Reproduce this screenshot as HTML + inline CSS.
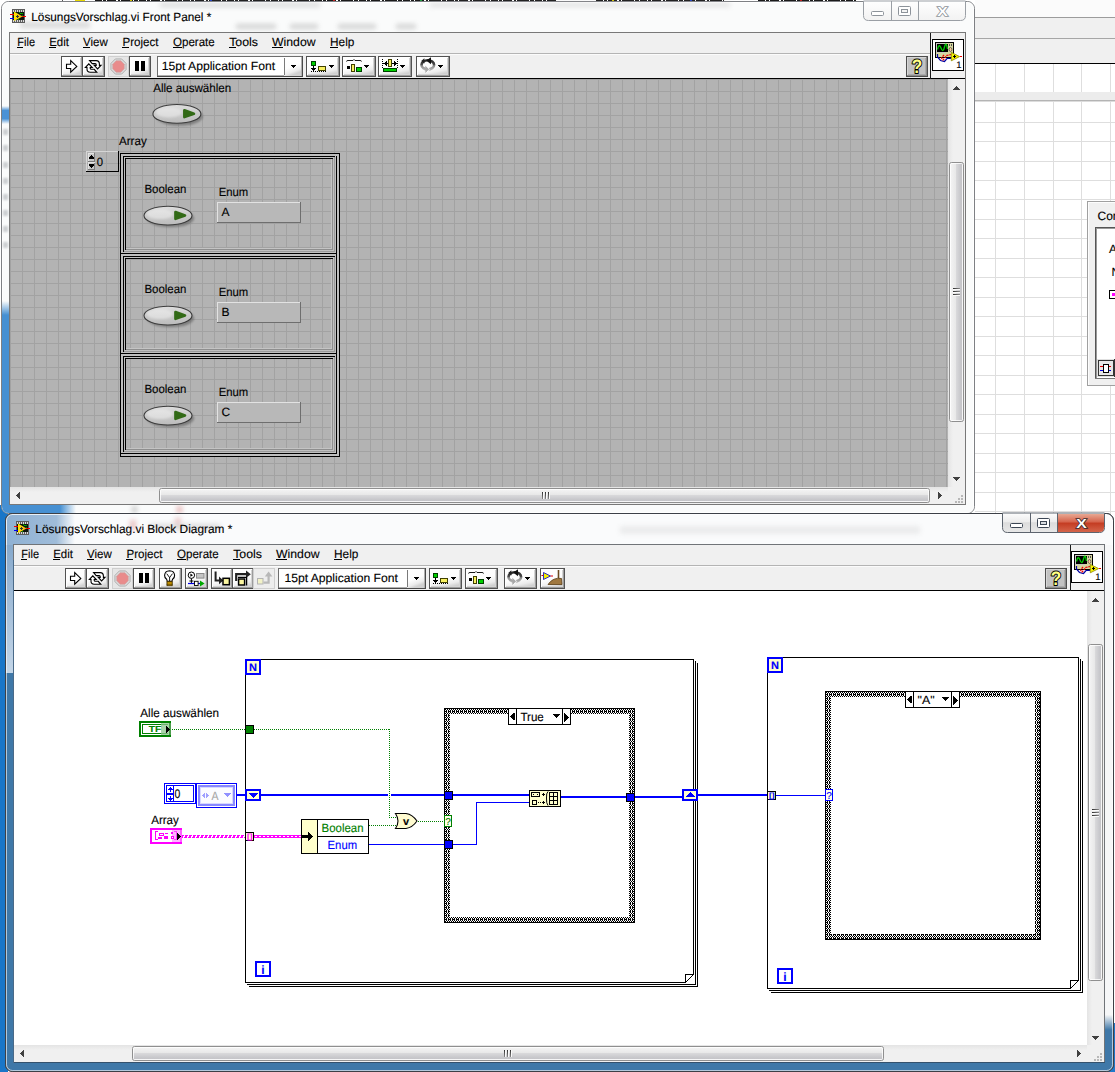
<!DOCTYPE html>
<html><head><meta charset="utf-8"><title>LabVIEW</title>
<style>
html,body{margin:0;padding:0;background:#fff;overflow:hidden}
svg{display:block;font-family:'Liberation Sans', sans-serif;}
svg text{white-space:pre}
</style></head><body>
<svg width="1115" height="1072" viewBox="0 0 1115 1072" shape-rendering="crispEdges" text-rendering="geometricPrecision">
<defs>
<pattern id="grid" x="10" y="79" width="12" height="12" patternUnits="userSpaceOnUse">
<rect width="12" height="12" fill="#b3b3b3"/><rect x="0" y="0" width="1" height="12" fill="#a2a2a2"/><rect x="0" y="0" width="12" height="1" fill="#a2a2a2"/>
</pattern>
<pattern id="chk" x="444" y="708" width="4" height="4" patternUnits="userSpaceOnUse">
<rect width="4" height="4" fill="#000"/>
<rect x="1" y="0" width="1" height="1" fill="#fff"/><rect x="0" y="1" width="1" height="1" fill="#fff"/><rect x="2" y="1" width="1" height="1" fill="#fff"/><rect x="1" y="2" width="1" height="1" fill="#fff"/><rect x="3" y="3" width="1" height="1" fill="#fff"/><rect x="3" y="0" width="1" height="1" fill="#fff"/><rect x="3" y="2" width="1" height="1" fill="#fff"/>
</pattern>
<pattern id="chk2" x="825" y="691" width="4" height="4" patternUnits="userSpaceOnUse">
<rect width="4" height="4" fill="#000"/>
<rect x="1" y="0" width="1" height="1" fill="#fff"/><rect x="0" y="1" width="1" height="1" fill="#fff"/><rect x="2" y="1" width="1" height="1" fill="#fff"/><rect x="1" y="2" width="1" height="1" fill="#fff"/><rect x="3" y="3" width="1" height="1" fill="#fff"/><rect x="3" y="0" width="1" height="1" fill="#fff"/><rect x="3" y="2" width="1" height="1" fill="#fff"/>
</pattern>
<linearGradient id="thumbV" x1="0" x2="1" y1="0" y2="0"><stop offset="0" stop-color="#f6f6f6"/><stop offset="0.45" stop-color="#e8e8e8"/><stop offset="0.5" stop-color="#d8d8da"/><stop offset="0.85" stop-color="#c4c4c8"/><stop offset="1" stop-color="#dedee0"/></linearGradient>
<linearGradient id="thumbH" x1="0" x2="0" y1="0" y2="1"><stop offset="0" stop-color="#f6f6f6"/><stop offset="0.45" stop-color="#e8e8e8"/><stop offset="0.5" stop-color="#d8d8da"/><stop offset="0.85" stop-color="#c4c4c8"/><stop offset="1" stop-color="#dedee0"/></linearGradient>
<linearGradient id="trackV" x1="0" x2="1" y1="0" y2="0"><stop offset="0" stop-color="#e4e4e4"/><stop offset="0.3" stop-color="#f0f0f0"/><stop offset="1" stop-color="#f0f0f0"/></linearGradient>
<linearGradient id="trackH" x1="0" x2="0" y1="0" y2="1"><stop offset="0" stop-color="#e4e4e4"/><stop offset="0.3" stop-color="#f0f0f0"/><stop offset="1" stop-color="#f0f0f0"/></linearGradient>
<linearGradient id="btn" x1="0" x2="0.35" y1="0" y2="1"><stop offset="0" stop-color="#ffffff"/><stop offset="0.6" stop-color="#fdfdfd"/><stop offset="0.85" stop-color="#ececec"/><stop offset="1" stop-color="#d0d0d0"/></linearGradient>
<linearGradient id="oval" x1="0" x2="0" y1="0" y2="1"><stop offset="0" stop-color="#dedede"/><stop offset="0.5" stop-color="#cacaca"/><stop offset="1" stop-color="#bcbcbc"/></linearGradient>
<linearGradient id="closeR" x1="0" x2="0" y1="0" y2="1"><stop offset="0" stop-color="#e8a893"/><stop offset="0.45" stop-color="#d5624a"/><stop offset="0.5" stop-color="#c43c22"/><stop offset="1" stop-color="#d4644a"/></linearGradient>
<linearGradient id="capG" x1="0" x2="0" y1="0" y2="1"><stop offset="0" stop-color="#fdfdfd"/><stop offset="0.45" stop-color="#ececec"/><stop offset="0.5" stop-color="#dcdcdc"/><stop offset="1" stop-color="#e8e8e8"/></linearGradient>
<linearGradient id="capI" x1="0" x2="0" y1="0" y2="1"><stop offset="0" stop-color="#ffffff"/><stop offset="1" stop-color="#f2f2f2"/></linearGradient>
<linearGradient id="fpLeft" x1="0" x2="0" y1="0" y2="1" gradientUnits="userSpaceOnUse"><stop offset="0" stop-color="#f4f5f6"/><stop offset="0.265" stop-color="#f4f5f6"/><stop offset="0.3" stop-color="#4d93cf"/><stop offset="1" stop-color="#3d86c8"/></linearGradient>
<linearGradient id="bdTitle" x1="6" x2="90" y1="0" y2="0" gradientUnits="userSpaceOnUse"><stop offset="0" stop-color="#8fb1d3"/><stop offset="0.6" stop-color="#9fbcd9"/><stop offset="0.82" stop-color="#fafbfc"/><stop offset="1" stop-color="#fafbfc"/></linearGradient>
<linearGradient id="fpBlueH" x1="60" x2="76" y1="0" y2="0" gradientUnits="userSpaceOnUse"><stop offset="0" stop-color="#4690d2"/><stop offset="1" stop-color="#fafbfb"/></linearGradient>
<filter id="blur2" x="-20%" y="-20%" width="140%" height="140%"><feGaussianBlur stdDeviation="1.2"/></filter>
<filter id="blur3" x="-20%" y="-50%" width="140%" height="200%"><feGaussianBlur stdDeviation="2.5"/></filter>
<linearGradient id="fpBlue" x1="0" x2="0" y1="301" y2="315" gradientUnits="userSpaceOnUse"><stop offset="0" stop-color="#fafbfb"/><stop offset="1" stop-color="#4690d2"/></linearGradient>
<filter id="blurA" x="-30%" y="-30%" width="160%" height="160%"><feGaussianBlur stdDeviation="0.5"/></filter>
<linearGradient id="bdLeft" x1="0" x2="0" y1="545" y2="673" gradientUnits="userSpaceOnUse"><stop offset="0" stop-color="#86a9cc"/><stop offset="1" stop-color="#c4d6e8"/></linearGradient>
<linearGradient id="bdRight" x1="0" x2="0" y1="1015" y2="1030" gradientUnits="userSpaceOnUse"><stop offset="0" stop-color="#f4f5f6"/><stop offset="1" stop-color="#3f78a8"/></linearGradient>
<pattern id="hatch" x="182" y="835" width="4" height="3" patternUnits="userSpaceOnUse"><rect width="4" height="3" fill="#ff00ff"/><rect x="2" y="0" width="1" height="1" fill="#fff"/><rect x="1" y="1" width="2" height="1" fill="#fff"/><rect x="1" y="2" width="1" height="1" fill="#fff"/></pattern>
<linearGradient id="ringG" x1="0" x2="0" y1="0" y2="1"><stop offset="0" stop-color="#2a2a2a"/><stop offset="0.45" stop-color="#4a4a4a"/><stop offset="0.6" stop-color="#8e8e8e"/><stop offset="1" stop-color="#b0b0b0"/></linearGradient>
<linearGradient id="smudge" x1="0" x2="0" y1="0" y2="1"><stop offset="0" stop-color="#fafbfb"/><stop offset="0.25" stop-color="#4a92d6"/><stop offset="0.7" stop-color="#4a92d6"/><stop offset="1" stop-color="#fafbfb"/></linearGradient>
<linearGradient id="triG" x1="0" x2="1" y1="0" y2="0"><stop offset="0" stop-color="#ffe800"/><stop offset="0.6" stop-color="#f8cc10"/><stop offset="1" stop-color="#e8a020"/></linearGradient>
<linearGradient id="gripH" x1="0" x2="1" y1="0" y2="0"><stop offset="0" stop-color="#2e2e2e"/><stop offset="1" stop-color="#8a8a8a"/></linearGradient>
<linearGradient id="gripV" x1="0" x2="0" y1="0" y2="1"><stop offset="0" stop-color="#2e2e2e"/><stop offset="1" stop-color="#8a8a8a"/></linearGradient>
<clipPath id="fpclip"><rect x="10" y="79" width="938" height="408"/></clipPath>
</defs>
<rect x="0" y="0" width="1115" height="1072" fill="#ffffff" />
<rect x="0" y="505" width="8" height="567" fill="#1976c8" />
<rect x="1108" y="1023" width="7" height="49" fill="#1e78c9" />
<rect x="62" y="0" width="1" height="1" fill="#555" />
<rect x="75" y="0" width="10" height="1" fill="#e8d800" />
<line x1="95" y1="0.5" x2="556" y2="0.5" stroke="#1a1a1a" stroke-width="1" stroke-dasharray="7 1 3 1 9 2 2 1 12 1 4 1"/>
<line x1="596" y1="0.5" x2="724" y2="0.5" stroke="#1a1a1a" stroke-width="1" stroke-dasharray="7 1 3 1 9 2 2 1 12 1 4 1"/>
<line x1="758" y1="0.5" x2="856" y2="0.5" stroke="#1a1a1a" stroke-width="1" stroke-dasharray="7 1 3 1 9 2 2 1 12 1 4 1"/>
<rect x="130" y="0" width="2" height="1" fill="#d0c000" />
<rect x="210" y="0" width="2" height="1" fill="#2040c0" />
<rect x="333" y="0" width="2" height="1" fill="#c02020" />
<rect x="420" y="0" width="2" height="1" fill="#20a040" />
<rect x="612" y="0" width="2" height="1" fill="#d0c000" />
<rect x="690" y="0" width="2" height="1" fill="#2040c0" />
<rect x="800" y="0" width="2" height="1" fill="#c02020" />
<rect x="975" y="0" width="140" height="17" fill="#fbfbfb" />
<rect x="975" y="17" width="140" height="1" fill="#9c9c9c" />
<rect x="975" y="18" width="140" height="20" fill="#f0f0f0" />
<rect x="975" y="38" width="140" height="1" fill="#a6a6a6" />
<rect x="975" y="39" width="140" height="24" fill="#f0f0f0" />
<rect x="975" y="63" width="140" height="1" fill="#000000" />
<rect x="975" y="64" width="140" height="450" fill="#ffffff" />
<rect x="995" y="64" width="1" height="28" fill="#dedede" />
<rect x="995" y="101" width="1" height="413" fill="#dedede" />
<rect x="1024" y="64" width="1" height="28" fill="#dedede" />
<rect x="1024" y="101" width="1" height="413" fill="#dedede" />
<rect x="1053" y="64" width="1" height="28" fill="#dedede" />
<rect x="1053" y="101" width="1" height="413" fill="#dedede" />
<rect x="1081" y="64" width="1" height="28" fill="#dedede" />
<rect x="1081" y="101" width="1" height="413" fill="#dedede" />
<rect x="1110" y="64" width="1" height="28" fill="#dedede" />
<rect x="1110" y="101" width="1" height="413" fill="#dedede" />
<rect x="975" y="122" width="140" height="1" fill="#dedede" />
<rect x="975" y="141" width="140" height="1" fill="#dedede" />
<rect x="975" y="161" width="140" height="1" fill="#dedede" />
<rect x="975" y="180" width="140" height="1" fill="#dedede" />
<rect x="975" y="199" width="140" height="1" fill="#dedede" />
<rect x="975" y="219" width="140" height="1" fill="#dedede" />
<rect x="975" y="238" width="140" height="1" fill="#dedede" />
<rect x="975" y="258" width="140" height="1" fill="#dedede" />
<rect x="975" y="277" width="140" height="1" fill="#dedede" />
<rect x="975" y="297" width="140" height="1" fill="#dedede" />
<rect x="975" y="316" width="140" height="1" fill="#dedede" />
<rect x="975" y="336" width="140" height="1" fill="#dedede" />
<rect x="975" y="355" width="140" height="1" fill="#dedede" />
<rect x="975" y="375" width="140" height="1" fill="#dedede" />
<rect x="975" y="394" width="140" height="1" fill="#dedede" />
<rect x="975" y="414" width="140" height="1" fill="#dedede" />
<rect x="975" y="433" width="140" height="1" fill="#dedede" />
<rect x="975" y="453" width="140" height="1" fill="#dedede" />
<rect x="975" y="472" width="140" height="1" fill="#dedede" />
<rect x="975" y="492" width="140" height="1" fill="#dedede" />
<rect x="975" y="511" width="140" height="1" fill="#dedede" />
<rect x="975" y="92" width="140" height="8" fill="#ececec" />
<rect x="975" y="100" width="140" height="1" fill="#b4b4b4" />
<rect x="975" y="101" width="140" height="1" fill="#dcdcdc" />
<rect x="1087" y="201" width="28" height="185" fill="#f0f0f0" />
<rect x="1087" y="201" width="1" height="185" fill="#a0a0a0" />
<rect x="1087" y="201" width="28" height="1" fill="#a0a0a0" />
<rect x="1087" y="385" width="28" height="1" fill="#a0a0a0" />
<rect x="1088" y="202" width="1" height="183" fill="#fdfdfd" />
<rect x="1088" y="202" width="27" height="1" fill="#fdfdfd" />
<rect x="1095" y="227" width="20" height="152" fill="#ffffff" />
<rect x="1095" y="227" width="1" height="152" fill="#555" />
<rect x="1095" y="227" width="20" height="1" fill="#555" />
<rect x="1095" y="378" width="20" height="1" fill="#777" />
<rect x="1096" y="228" width="1" height="150" fill="#999" />
<rect x="1096" y="228" width="19" height="1" fill="#999" />
<text x="1097.5" y="219.5" font-size="12" fill="#000" stroke="#000" stroke-width="0.12" font-weight="normal" text-anchor="start" >Con</text>
<text x="1109" y="252.7" font-size="12" fill="#000" stroke="#000" stroke-width="0.12" font-weight="normal" text-anchor="start" >Ar</text>
<text x="1111.5" y="276" font-size="12" fill="#000" stroke="#000" stroke-width="0.12" font-weight="normal" text-anchor="start" >No</text>
<rect x="1109.5" y="290.5" width="9" height="8" fill="#fff" stroke="#000" stroke-width="1"/>
<rect x="1112" y="293" width="3" height="3" fill="#ff00ff" />
<rect x="1097" y="359" width="18" height="18" fill="#e0e0e0" />
<rect x="1098.5" y="360.5" width="15" height="15" fill="#e6e6e6" stroke="#333" stroke-width="1"/>
<rect x="1100" y="366" width="11" height="1" fill="#e00000" />
<rect x="1100" y="370" width="11" height="1" fill="#0000e0" />
<rect x="1103.5" y="364.5" width="5" height="8" fill="#fff" stroke="#000" stroke-width="1"/>
<rect x="1114" y="359" width="1" height="18" fill="#333" />
<g id="fpwin">
<rect x="1.5" y="1.5" width="973" height="512" rx="7" fill="#fafbfb" stroke="#7e8084" shape-rendering="geometricPrecision"/>
<rect x="2.5" y="2.5" width="971" height="510" rx="6" fill="none" stroke="#ffffff" shape-rendering="geometricPrecision"/>
<g filter="url(#blur3)" opacity="0.35"><rect x="236" y="24" width="40" height="5" fill="#8a8a8a"/><rect x="290" y="24" width="28" height="5" fill="#8a8a8a"/><rect x="338" y="24" width="38" height="5" fill="#8a8a8a"/><rect x="396" y="24" width="20" height="5" fill="#8a8a8a"/><rect x="20" y="22" width="70" height="6" fill="#9a9a9a"/><rect x="132" y="506" width="5" height="7" fill="#707070"/><rect x="177" y="506" width="5" height="7" fill="#c03030"/><rect x="160" y="3" width="160" height="4" fill="#9a9a9a"/><rect x="430" y="3" width="300" height="4" fill="#b0b0b0"/></g>
<path d="M2,300 L9,300 L9,505 L60,505 L60,513 L9,513 Q2,513 2,506 Z" fill="url(#fpBlue)" shape-rendering="geometricPrecision"/>
<rect x="60" y="505" width="16" height="8" fill="url(#fpBlueH)"/>
<g filter="url(#blur2)" opacity="0.55"><rect x="3" y="129" width="5" height="6" fill="#a8acb0"/><rect x="3" y="145" width="5" height="6" fill="#a8acb0"/><rect x="3" y="162" width="5" height="6" fill="#a8acb0"/><rect x="3" y="178" width="5" height="6" fill="#a8acb0"/><rect x="3" y="194" width="5" height="6" fill="#a8acb0"/><rect x="3" y="210" width="5" height="6" fill="#a8acb0"/><rect x="3" y="226" width="5" height="6" fill="#a8acb0"/><rect x="3" y="242" width="5" height="6" fill="#a8acb0"/></g>
<rect x="2" y="106" width="7" height="18" fill="url(#smudge)"/>
<rect x="9.5" y="32.5" width="956" height="472" fill="none" stroke="#787878" stroke-width="1"/>
<rect x="10" y="33" width="955" height="471" fill="#f0f0f0" />
<rect x="10" y="53" width="920" height="1" fill="#b4b4b4" />
<rect x="10" y="54" width="920" height="1" fill="#fbfbfb" />
<rect x="10" y="78" width="955" height="1" fill="#000000" />
<rect x="930" y="33" width="1" height="46" fill="#1a1a1a" />
<text x="17.3" y="45.7" font-size="12" fill="#000" stroke="#000" stroke-width="0.12" font-weight="normal" text-anchor="start" textLength="17.7" lengthAdjust="spacingAndGlyphs" >File</text>
<rect x="17" y="47" width="6" height="1" fill="#000" />
<text x="49.2" y="45.7" font-size="12" fill="#000" stroke="#000" stroke-width="0.12" font-weight="normal" text-anchor="start" textLength="19.7" lengthAdjust="spacingAndGlyphs" >Edit</text>
<rect x="49" y="47" width="7" height="1" fill="#000" />
<text x="83" y="45.7" font-size="12" fill="#000" stroke="#000" stroke-width="0.12" font-weight="normal" text-anchor="start" textLength="24.7" lengthAdjust="spacingAndGlyphs" >View</text>
<rect x="83" y="47" width="7" height="1" fill="#000" />
<text x="122.5" y="45.7" font-size="12" fill="#000" stroke="#000" stroke-width="0.12" font-weight="normal" text-anchor="start" textLength="36" lengthAdjust="spacingAndGlyphs" >Project</text>
<rect x="122" y="47" width="7" height="1" fill="#000" />
<text x="173" y="45.7" font-size="12" fill="#000" stroke="#000" stroke-width="0.12" font-weight="normal" text-anchor="start" textLength="41.7" lengthAdjust="spacingAndGlyphs" >Operate</text>
<rect x="173" y="47" width="9" height="1" fill="#000" />
<text x="229.2" y="45.7" font-size="12" fill="#000" stroke="#000" stroke-width="0.12" font-weight="normal" text-anchor="start" textLength="28.8" lengthAdjust="spacingAndGlyphs" >Tools</text>
<rect x="229" y="47" width="7" height="1" fill="#000" />
<text x="272" y="45.7" font-size="12" fill="#000" stroke="#000" stroke-width="0.12" font-weight="normal" text-anchor="start" textLength="43.6" lengthAdjust="spacingAndGlyphs" >Window</text>
<rect x="272" y="47" width="11" height="1" fill="#000" />
<text x="330.1" y="45.7" font-size="12" fill="#000" stroke="#000" stroke-width="0.12" font-weight="normal" text-anchor="start" textLength="24.3" lengthAdjust="spacingAndGlyphs" >Help</text>
<rect x="330" y="47" width="8" height="1" fill="#000" />
<text x="31.3" y="20.8" font-size="12" fill="#000" stroke="#000" stroke-width="0.12" font-weight="normal" text-anchor="start" textLength="180" lengthAdjust="spacingAndGlyphs" >LösungsVorschlag.vi Front Panel *</text>
<rect x="12" y="9" width="13" height="14" fill="#5c5c5c" />
<rect x="13" y="10" width="1" height="2" fill="#d8d8d8" />
<rect x="13" y="20" width="1" height="2" fill="#d8d8d8" />
<rect x="15" y="10" width="1" height="2" fill="#d8d8d8" />
<rect x="15" y="20" width="1" height="2" fill="#d8d8d8" />
<rect x="17" y="10" width="1" height="2" fill="#d8d8d8" />
<rect x="17" y="20" width="1" height="2" fill="#d8d8d8" />
<rect x="19" y="10" width="1" height="2" fill="#d8d8d8" />
<rect x="19" y="20" width="1" height="2" fill="#d8d8d8" />
<rect x="21" y="10" width="1" height="2" fill="#d8d8d8" />
<rect x="21" y="20" width="1" height="2" fill="#d8d8d8" />
<rect x="23" y="10" width="1" height="2" fill="#d8d8d8" />
<rect x="23" y="20" width="1" height="2" fill="#d8d8d8" />
<rect x="13" y="12" width="11" height="8" fill="#0c140c" />
<rect x="19" y="12" width="1" height="1" fill="#00a000" />
<rect x="21" y="13" width="2" height="1" fill="#00a000" />
<rect x="22" y="15" width="1" height="2" fill="#008000" />
<rect x="18" y="19" width="1" height="1" fill="#00a000" />
<rect x="20" y="13" width="1" height="1" fill="#00c000" />
<rect x="10" y="14" width="4" height="1" fill="#f00000" />
<rect x="10" y="18" width="4" height="1" fill="#0000f0" />
<rect x="22" y="16" width="4" height="1" fill="#f00000" />
<polygon points="14,11.5 22.6,16.4 14,21" fill="url(#triG)" shape-rendering="geometricPrecision"/>
<rect x="16" y="16" width="3" height="1" fill="#333" />
<rect x="17" y="15" width="1" height="3" fill="#333" />
<path d="M863.5,1 L863.5,15.5 Q863.5,20.5 868.5,20.5 L960.5,20.5 Q965.5,20.5 965.5,15.5 L965.5,1 Z" fill="url(#capI)" stroke="#9a9fa5" shape-rendering="geometricPrecision"/>
<rect x="891" y="1" width="1" height="20" fill="#9a9fa5" />
<rect x="918" y="1" width="1" height="20" fill="#9a9fa5" />
<rect x="871.5" y="11.5" width="12" height="4" rx="1" fill="#fff" stroke="#8d939a" shape-rendering="geometricPrecision"/>
<rect x="898.5" y="6.5" width="12" height="9" rx="1" fill="#fff" stroke="#8d939a" shape-rendering="geometricPrecision"/>
<rect x="901.5" y="9.5" width="6" height="3" fill="#f4f4f4" stroke="#8d939a" shape-rendering="geometricPrecision"/>
<text x="942.5" y="15.6" font-size="13" font-weight="bold" text-anchor="middle" fill="#fff" stroke="#8d939a" stroke-width="1.5" paint-order="stroke" textLength="10.5" lengthAdjust="spacingAndGlyphs" shape-rendering="geometricPrecision">X</text>
<rect x="61" y="56" width="22" height="21" fill="url(#btn)" />
<rect x="61.5" y="56.5" width="21" height="20" fill="none" stroke="#525252" stroke-width="1"/>
<rect x="62" y="75" width="20" height="1" fill="#9c9c9c" />
<rect x="81" y="57" width="1" height="19" fill="#9c9c9c" />
<rect x="63" y="74" width="18" height="1" fill="#d4d4d4" />
<rect x="80" y="58" width="1" height="17" fill="#d4d4d4" />
<rect x="62" y="57" width="19" height="1" fill="#ffffff" />
<rect x="62" y="57" width="1" height="18" fill="#ffffff" />
<polygon points="66.5,64.3 70.7,64.3 70.7,60.6 76.8,66.4 70.7,72.2 70.7,68.5 66.5,68.5" fill="#fff" stroke="#000" stroke-width="1.1" shape-rendering="geometricPrecision"/>
<rect x="82" y="56" width="23" height="21" fill="url(#btn)" />
<rect x="82.5" y="56.5" width="22" height="20" fill="none" stroke="#525252" stroke-width="1"/>
<rect x="83" y="75" width="21" height="1" fill="#9c9c9c" />
<rect x="103" y="57" width="1" height="19" fill="#9c9c9c" />
<rect x="84" y="74" width="19" height="1" fill="#d4d4d4" />
<rect x="102" y="58" width="1" height="17" fill="#d4d4d4" />
<rect x="83" y="57" width="20" height="1" fill="#ffffff" />
<rect x="83" y="57" width="1" height="18" fill="#ffffff" />
<g shape-rendering="geometricPrecision" fill="#fff" stroke="#000" stroke-width="1.1" stroke-linejoin="miter"><path d="M89.6,60.6 L96.2,60.6 Q99.4,60.8 99.4,64 L99.4,65.4 L101,65.4 L97.6,69 L94.2,65.4 L96.2,65.4 L96.2,64.6 Q96.2,63.6 95.2,63.6 L92.2,63.6 Z"/><path d="M96.8,72.3 L90.2,72.3 Q87,72.1 87,68.9 L87,67.5 L85.4,67.5 L88.8,63.9 L92.2,67.5 L90.2,67.5 L90.2,68.3 Q90.2,69.3 91.2,69.3 L94.2,69.3 Z"/></g>
<rect x="108" y="56" width="21" height="21" fill="#e6e6e6" />
<rect x="108.5" y="56.5" width="20" height="20" fill="none" stroke="#cfcfcf" stroke-width="1"/>
<polygon points="126.08,69.64 121.64,74.08 115.36,74.08 110.92,69.64 110.92,63.36 115.36,58.92 121.64,58.92 126.08,63.36" fill="#dcdcdc" stroke="#a4a4a4" stroke-width="0.8" shape-rendering="geometricPrecision"/>
<polygon points="124.23,68.87 120.87,72.23 116.13,72.23 112.77,68.87 112.77,64.13 116.13,60.77 120.87,60.77 124.23,64.13" fill="#e98b8b" stroke="#c9a0a0" stroke-width="0.6" shape-rendering="geometricPrecision"/>
<rect x="129" y="56" width="22" height="21" fill="url(#btn)" />
<rect x="129.5" y="56.5" width="21" height="20" fill="none" stroke="#525252" stroke-width="1"/>
<rect x="130" y="75" width="20" height="1" fill="#9c9c9c" />
<rect x="149" y="57" width="1" height="19" fill="#9c9c9c" />
<rect x="131" y="74" width="18" height="1" fill="#d4d4d4" />
<rect x="148" y="58" width="1" height="17" fill="#d4d4d4" />
<rect x="130" y="57" width="19" height="1" fill="#ffffff" />
<rect x="130" y="57" width="1" height="18" fill="#ffffff" />
<rect x="135" y="61" width="4" height="10" fill="#000" />
<rect x="141" y="61" width="4" height="10" fill="#000" />
<rect x="157" y="56" width="146" height="21" fill="#ffffff" />
<rect x="157" y="56" width="146" height="1" fill="#6e6e6e" />
<rect x="157" y="56" width="1" height="21" fill="#6e6e6e" />
<rect x="157" y="76" width="146" height="1" fill="#4a4a4a" />
<rect x="302" y="56" width="1" height="21" fill="#4a4a4a" />
<rect x="158" y="75" width="144" height="1" fill="#b0b0b0" />
<rect x="301" y="57" width="1" height="19" fill="#b0b0b0" />
<rect x="284" y="57" width="17" height="19" fill="url(#btn)" />
<rect x="284" y="58" width="1" height="17" fill="#7a7a7a" />
<rect x="291" y="65" width="5" height="1" fill="#000" />
<rect x="292" y="66" width="3" height="1" fill="#000" />
<rect x="293" y="67" width="1" height="1" fill="#000" />
<text x="161.7" y="70" font-size="12" fill="#000" stroke="#000" stroke-width="0.12" font-weight="normal" text-anchor="start" textLength="113.5" lengthAdjust="spacingAndGlyphs" >15pt Application Font</text>
<rect x="306" y="56" width="34" height="21" fill="url(#btn)" />
<rect x="306.5" y="56.5" width="33" height="20" fill="none" stroke="#525252" stroke-width="1"/>
<rect x="307" y="75" width="32" height="1" fill="#9c9c9c" />
<rect x="338" y="57" width="1" height="19" fill="#9c9c9c" />
<rect x="308" y="74" width="30" height="1" fill="#d4d4d4" />
<rect x="337" y="58" width="1" height="17" fill="#d4d4d4" />
<rect x="307" y="57" width="31" height="1" fill="#ffffff" />
<rect x="307" y="57" width="1" height="18" fill="#ffffff" />
<rect x="311.5" y="61.5" width="4" height="4" fill="#00d000" stroke="#004000" stroke-width="1"/>
<rect x="313" y="66" width="1" height="5" fill="#000" />
<rect x="311" y="68" width="5" height="1" fill="#000" />
<rect x="312" y="69" width="3" height="1" fill="#000" />
<rect x="318.5" y="66.5" width="7" height="4" fill="#f8f060" stroke="#404000" stroke-width="1"/>
<line x1="311" y1="71.5" x2="326" y2="71.5" stroke="#000" stroke-dasharray="1 1"/>
<rect x="329" y="65" width="5" height="1" fill="#000" />
<rect x="330" y="66" width="3" height="1" fill="#000" />
<rect x="331" y="67" width="1" height="1" fill="#000" />
<rect x="342" y="56" width="34" height="21" fill="url(#btn)" />
<rect x="342.5" y="56.5" width="33" height="20" fill="none" stroke="#525252" stroke-width="1"/>
<rect x="343" y="75" width="32" height="1" fill="#9c9c9c" />
<rect x="374" y="57" width="1" height="19" fill="#9c9c9c" />
<rect x="344" y="74" width="30" height="1" fill="#d4d4d4" />
<rect x="373" y="58" width="1" height="17" fill="#d4d4d4" />
<rect x="343" y="57" width="31" height="1" fill="#ffffff" />
<rect x="343" y="57" width="1" height="18" fill="#ffffff" />
<path d="M346.5,61.5 Q346.5,60.5 348,60.5 L353,60.5 L354,59.5 L355,60.5 L360,60.5 Q361.5,60.5 361.5,61.5" stroke="#000" fill="none" stroke-width="0.9" shape-rendering="geometricPrecision"/>
<rect x="347" y="66" width="3" height="3" fill="#000" />
<rect x="351.5" y="64.5" width="3" height="7" fill="#f8f060" stroke="#404000" stroke-width="1"/>
<rect x="356.5" y="67.5" width="5" height="4" fill="#00d000" stroke="#004000" stroke-width="1"/>
<rect x="364" y="65" width="5" height="1" fill="#000" />
<rect x="365" y="66" width="3" height="1" fill="#000" />
<rect x="366" y="67" width="1" height="1" fill="#000" />
<rect x="378" y="56" width="34" height="21" fill="url(#btn)" />
<rect x="378.5" y="56.5" width="33" height="20" fill="none" stroke="#525252" stroke-width="1"/>
<rect x="379" y="75" width="32" height="1" fill="#9c9c9c" />
<rect x="410" y="57" width="1" height="19" fill="#9c9c9c" />
<rect x="380" y="74" width="30" height="1" fill="#d4d4d4" />
<rect x="409" y="58" width="1" height="17" fill="#d4d4d4" />
<rect x="379" y="57" width="31" height="1" fill="#ffffff" />
<rect x="379" y="57" width="1" height="18" fill="#ffffff" />
<line x1="382.5" y1="59" x2="382.5" y2="68" stroke="#000" stroke-dasharray="1 1"/>
<line x1="397.5" y1="59" x2="397.5" y2="68" stroke="#000" stroke-dasharray="1 1"/>
<rect x="383" y="63" width="15" height="1" fill="#000" />
<rect x="384" y="63" width="1" height="1" fill="#000" />
<rect x="385" y="62" width="1" height="3" fill="#000" />
<rect x="386" y="61" width="1" height="5" fill="#000" />
<rect x="394" y="61" width="1" height="5" fill="#000" />
<rect x="395" y="62" width="1" height="3" fill="#000" />
<rect x="396" y="63" width="1" height="1" fill="#000" />
<rect x="388.5" y="59.5" width="3" height="7" fill="#f8f060" stroke="#404000" stroke-width="1"/>
<rect x="383.5" y="68.5" width="13" height="3" fill="#00d000" stroke="#004000" stroke-width="1"/>
<rect x="400" y="65" width="5" height="1" fill="#000" />
<rect x="401" y="66" width="3" height="1" fill="#000" />
<rect x="402" y="67" width="1" height="1" fill="#000" />
<rect x="416" y="56" width="34" height="21" fill="url(#btn)" />
<rect x="416.5" y="56.5" width="33" height="20" fill="none" stroke="#525252" stroke-width="1"/>
<rect x="417" y="75" width="32" height="1" fill="#9c9c9c" />
<rect x="448" y="57" width="1" height="19" fill="#9c9c9c" />
<rect x="418" y="74" width="30" height="1" fill="#d4d4d4" />
<rect x="447" y="58" width="1" height="17" fill="#d4d4d4" />
<rect x="417" y="57" width="31" height="1" fill="#ffffff" />
<rect x="417" y="57" width="1" height="18" fill="#ffffff" />
<g shape-rendering="geometricPrecision"><ellipse cx="427.8" cy="64.9" rx="6.3" ry="4.6" fill="none" stroke="url(#ringG)" stroke-width="2.6"/><polygon points="431.0,57.300000000000004 426.2,60.50000000000001 431.0,64.30000000000001" fill="#111"/><polygon points="424.40000000000003,58.300000000000004 421.2,60.900000000000006 424.40000000000003,63.50000000000001" fill="#222"/><polygon points="425.40000000000003,65.7 430.0,69.30000000000001 425.40000000000003,72.9" fill="#a8a8a8"/><path d="M426.40000000000003,65.9 L429.40000000000003,69.30000000000001 L426.40000000000003,72.7" fill="none" stroke="#fff" stroke-width="0.9"/></g>
<rect x="438" y="65" width="5" height="1" fill="#000" />
<rect x="439" y="66" width="3" height="1" fill="#000" />
<rect x="440" y="67" width="1" height="1" fill="#000" />
<rect x="906" y="56" width="22" height="21" fill="#c2c2c2" />
<rect x="906.5" y="56.5" width="21" height="20" fill="none" stroke="#4e4e4e" stroke-width="1"/>
<rect x="907" y="57" width="20" height="1" fill="#d6d6d6" />
<rect x="907" y="57" width="1" height="19" fill="#d6d6d6" />
<rect x="907" y="75" width="20" height="1" fill="#8c8c8c" />
<rect x="926" y="57" width="1" height="19" fill="#8c8c8c" />
<rect x="908" y="74" width="18" height="1" fill="#ababab" />
<rect x="925" y="58" width="1" height="17" fill="#ababab" />
<text x="916.9" y="73.4" font-size="19.5" font-weight="bold" text-anchor="middle" fill="#ffff84" stroke="#000" stroke-width="2" stroke-linejoin="round" paint-order="stroke" textLength="10.5" lengthAdjust="spacingAndGlyphs" shape-rendering="geometricPrecision">?</text>
<rect x="932" y="39" width="32" height="32" fill="#000" />
<rect x="933" y="40" width="30" height="30" fill="#fff" />
<rect x="935" y="42" width="19" height="16" fill="#000" />
<rect x="936" y="43" width="17" height="14" fill="#c8c8c0" />
<rect x="946" y="43" width="7" height="10" fill="#d6d6a0" />
<rect x="936" y="53" width="17" height="4" fill="#d6d6a0" />
<rect x="937" y="44" width="11" height="8" fill="#000" />
<path d="M937.5,49.5 Q939,42.5 941,48 T944.5,47 T947.5,49" stroke="#00d000" stroke-width="1.3" fill="none" shape-rendering="geometricPrecision"/>
<rect x="949" y="44" width="1" height="2" fill="#555" />
<rect x="951" y="44" width="1" height="2" fill="#555" />
<ellipse cx="950.5" cy="49.5" rx="1.4" ry="2" fill="#f8c890" stroke="#444" stroke-width="0.7" shape-rendering="geometricPrecision"/>
<path d="M937.5,54 L937.5,57 L940.5,60.5 L944.5,61.5 L947,58.5 L951,58.5" stroke="#0000a0" stroke-width="1.2" fill="none" shape-rendering="geometricPrecision"/>
<path d="M944,55 L941.5,58 L943,60 L945,58 L946.5,55.5 L951,54.5" stroke="#f00000" stroke-width="1.2" fill="none" stroke-dasharray="2.2 0.8" shape-rendering="geometricPrecision"/>
<polygon points="951.3,52.4 959.6,56.6 951.3,60.8" fill="#f4f000" stroke="#8a8400" stroke-width="0.8" shape-rendering="geometricPrecision"/>
<rect x="953" y="56" width="3" height="1" fill="#000" />
<rect x="954" y="55" width="1" height="3" fill="#000" />
<rect x="960" y="56" width="2" height="1" fill="#f00000" />
<text x="956.3" y="67.8" font-size="9.5" fill="#000" stroke="#000" stroke-width="0.12" font-weight="normal" text-anchor="start" >1</text>
<rect x="10" y="79" width="938" height="408" fill="url(#grid)" />
</g>
<text x="153.2" y="91.9" font-size="12" fill="#000" stroke="#000" stroke-width="0.12" font-weight="normal" text-anchor="start" textLength="78" lengthAdjust="spacingAndGlyphs" >Alle auswählen</text>
<g shape-rendering="geometricPrecision"><ellipse cx="179.5" cy="116.5" rx="23.5" ry="9.1" fill="#5e5e5e" filter="url(#blur2)" opacity="0.62"/><ellipse cx="176.9" cy="113.9" rx="24" ry="9.4" fill="url(#oval)" stroke="#3c3c3c" stroke-width="1.1"/><ellipse cx="168.9" cy="112.4" rx="13" ry="5.0" fill="#f0f0f0" opacity="0.55" filter="url(#blur2)"/><polygon points="184.4,110.30000000000001 193.9,113.7 184.4,117.10000000000001" fill="#336a18" stroke="#336a18" stroke-width="2.7" stroke-linejoin="round" filter="url(#blurA)"/></g>
<text x="119" y="144.7" font-size="12" fill="#000" stroke="#000" stroke-width="0.12" font-weight="normal" text-anchor="start" textLength="27.7" lengthAdjust="spacingAndGlyphs" >Array</text>
<rect x="86" y="151" width="32" height="1" fill="#d6d6d6" />
<rect x="86" y="151" width="1" height="21" fill="#d6d6d6" />
<rect x="86" y="171" width="33" height="1" fill="#000" />
<rect x="118" y="151" width="1" height="21" fill="#000" />
<rect x="88" y="153" width="7" height="17" fill="#c6c6c6" />
<rect x="88" y="153" width="7" height="1" fill="#e4e4e4" />
<rect x="88" y="153" width="1" height="17" fill="#e4e4e4" />
<rect x="88" y="169" width="7" height="1" fill="#7a7a7a" />
<rect x="94" y="153" width="1" height="17" fill="#7a7a7a" />
<rect x="88" y="161" width="7" height="1" fill="#7a7a7a" />
<rect x="88" y="162" width="7" height="1" fill="#e4e4e4" />
<rect x="91" y="155" width="1" height="1" fill="#000" />
<rect x="90" y="156" width="3" height="1" fill="#000" />
<rect x="89" y="157" width="5" height="1" fill="#000" />
<rect x="89" y="158" width="5" height="1" fill="#000" />
<rect x="89" y="165" width="5" height="1" fill="#000" />
<rect x="90" y="166" width="3" height="1" fill="#000" />
<rect x="91" y="167" width="1" height="1" fill="#000" />
<rect x="89" y="164" width="5" height="1" fill="#000" />
<text x="96.8" y="165.7" font-size="12" fill="#000" stroke="#000" stroke-width="0.12" font-weight="normal" text-anchor="start" textLength="6.3" lengthAdjust="spacingAndGlyphs" >0</text>
<rect x="121" y="154" width="218" height="302" fill="#bfbfbf" />
<rect x="120.5" y="153.5" width="219" height="303" fill="none" stroke="#000" stroke-width="1"/>
<rect x="124" y="157" width="212" height="94" fill="url(#grid)" />
<rect x="120" y="153" width="217" height="1" fill="#000" />
<rect x="123" y="156" width="214" height="1" fill="#000" />
<rect x="123" y="156" width="1" height="96" fill="#000" />
<rect x="125" y="158" width="209" height="1" fill="#000" />
<rect x="125" y="158" width="1" height="92" fill="#000" />
<rect x="124" y="157" width="212" height="1" fill="#bfbfbf" />
<rect x="124" y="157" width="1" height="94" fill="#bfbfbf" />
<rect x="126" y="249" width="207" height="1" fill="#8e8e8e" />
<rect x="332" y="159" width="1" height="91" fill="#8e8e8e" />
<rect x="124" y="251" width="211" height="1" fill="#9a9a9a" />
<rect x="334" y="157" width="1" height="95" fill="#9a9a9a" />
<rect x="126" y="248" width="206" height="1" fill="#c4c4c4" />
<rect x="331" y="159" width="1" height="90" fill="#c4c4c4" />
<rect x="125" y="250" width="209" height="1" fill="#c0c0c0" />
<rect x="333" y="158" width="1" height="93" fill="#c0c0c0" />
<rect x="335" y="156" width="1" height="97" fill="#bfbfbf" />
<text x="144.4" y="193.4" font-size="12" fill="#000" stroke="#000" stroke-width="0.12" font-weight="normal" text-anchor="start" textLength="42" lengthAdjust="spacingAndGlyphs" >Boolean</text>
<g shape-rendering="geometricPrecision"><ellipse cx="170.6" cy="218.2" rx="23.5" ry="9.1" fill="#5e5e5e" filter="url(#blur2)" opacity="0.62"/><ellipse cx="168" cy="215.6" rx="24" ry="9.4" fill="url(#oval)" stroke="#3c3c3c" stroke-width="1.1"/><ellipse cx="160" cy="214.1" rx="13" ry="5.0" fill="#f0f0f0" opacity="0.55" filter="url(#blur2)"/><polygon points="175.5,212.0 185.0,215.4 175.5,218.79999999999998" fill="#336a18" stroke="#336a18" stroke-width="2.7" stroke-linejoin="round" filter="url(#blurA)"/></g>
<text x="218.7" y="195.7" font-size="12" fill="#000" stroke="#000" stroke-width="0.12" font-weight="normal" text-anchor="start" textLength="29.5" lengthAdjust="spacingAndGlyphs" >Enum</text>
<rect x="217" y="202" width="84" height="21" fill="#b8b8b8" />
<rect x="217" y="202" width="84" height="1" fill="#e2e2e2" />
<rect x="217" y="202" width="1" height="21" fill="#e2e2e2" />
<rect x="217" y="222" width="84" height="1" fill="#6e6e6e" />
<rect x="300" y="202" width="1" height="21" fill="#6e6e6e" />
<text x="221.6" y="216.4" font-size="12" fill="#000" stroke="#000" stroke-width="0.12" font-weight="normal" text-anchor="start" >A</text>
<rect x="124" y="257" width="212" height="94" fill="url(#grid)" />
<rect x="120" y="253" width="217" height="1" fill="#000" />
<rect x="123" y="256" width="214" height="1" fill="#000" />
<rect x="123" y="256" width="1" height="96" fill="#000" />
<rect x="125" y="258" width="209" height="1" fill="#000" />
<rect x="125" y="258" width="1" height="92" fill="#000" />
<rect x="124" y="257" width="212" height="1" fill="#bfbfbf" />
<rect x="124" y="257" width="1" height="94" fill="#bfbfbf" />
<rect x="126" y="349" width="207" height="1" fill="#8e8e8e" />
<rect x="332" y="259" width="1" height="91" fill="#8e8e8e" />
<rect x="124" y="351" width="211" height="1" fill="#9a9a9a" />
<rect x="334" y="257" width="1" height="95" fill="#9a9a9a" />
<rect x="126" y="348" width="206" height="1" fill="#c4c4c4" />
<rect x="331" y="259" width="1" height="90" fill="#c4c4c4" />
<rect x="125" y="350" width="209" height="1" fill="#c0c0c0" />
<rect x="333" y="258" width="1" height="93" fill="#c0c0c0" />
<rect x="335" y="256" width="1" height="97" fill="#bfbfbf" />
<text x="144.4" y="293.4" font-size="12" fill="#000" stroke="#000" stroke-width="0.12" font-weight="normal" text-anchor="start" textLength="42" lengthAdjust="spacingAndGlyphs" >Boolean</text>
<g shape-rendering="geometricPrecision"><ellipse cx="170.6" cy="318.20000000000005" rx="23.5" ry="9.1" fill="#5e5e5e" filter="url(#blur2)" opacity="0.62"/><ellipse cx="168" cy="315.6" rx="24" ry="9.4" fill="url(#oval)" stroke="#3c3c3c" stroke-width="1.1"/><ellipse cx="160" cy="314.1" rx="13" ry="5.0" fill="#f0f0f0" opacity="0.55" filter="url(#blur2)"/><polygon points="175.5,312.0 185.0,315.40000000000003 175.5,318.8" fill="#336a18" stroke="#336a18" stroke-width="2.7" stroke-linejoin="round" filter="url(#blurA)"/></g>
<text x="218.7" y="295.7" font-size="12" fill="#000" stroke="#000" stroke-width="0.12" font-weight="normal" text-anchor="start" textLength="29.5" lengthAdjust="spacingAndGlyphs" >Enum</text>
<rect x="217" y="302" width="84" height="21" fill="#b8b8b8" />
<rect x="217" y="302" width="84" height="1" fill="#e2e2e2" />
<rect x="217" y="302" width="1" height="21" fill="#e2e2e2" />
<rect x="217" y="322" width="84" height="1" fill="#6e6e6e" />
<rect x="300" y="302" width="1" height="21" fill="#6e6e6e" />
<text x="221.6" y="316.4" font-size="12" fill="#000" stroke="#000" stroke-width="0.12" font-weight="normal" text-anchor="start" >B</text>
<rect x="124" y="357" width="212" height="94" fill="url(#grid)" />
<rect x="120" y="353" width="217" height="1" fill="#000" />
<rect x="123" y="356" width="214" height="1" fill="#000" />
<rect x="123" y="356" width="1" height="96" fill="#000" />
<rect x="125" y="358" width="209" height="1" fill="#000" />
<rect x="125" y="358" width="1" height="92" fill="#000" />
<rect x="124" y="357" width="212" height="1" fill="#bfbfbf" />
<rect x="124" y="357" width="1" height="94" fill="#bfbfbf" />
<rect x="126" y="449" width="207" height="1" fill="#8e8e8e" />
<rect x="332" y="359" width="1" height="91" fill="#8e8e8e" />
<rect x="124" y="451" width="211" height="1" fill="#9a9a9a" />
<rect x="334" y="357" width="1" height="95" fill="#9a9a9a" />
<rect x="126" y="448" width="206" height="1" fill="#c4c4c4" />
<rect x="331" y="359" width="1" height="90" fill="#c4c4c4" />
<rect x="125" y="450" width="209" height="1" fill="#c0c0c0" />
<rect x="333" y="358" width="1" height="93" fill="#c0c0c0" />
<rect x="335" y="356" width="1" height="97" fill="#bfbfbf" />
<text x="144.4" y="393.4" font-size="12" fill="#000" stroke="#000" stroke-width="0.12" font-weight="normal" text-anchor="start" textLength="42" lengthAdjust="spacingAndGlyphs" >Boolean</text>
<g shape-rendering="geometricPrecision"><ellipse cx="170.6" cy="418.20000000000005" rx="23.5" ry="9.1" fill="#5e5e5e" filter="url(#blur2)" opacity="0.62"/><ellipse cx="168" cy="415.6" rx="24" ry="9.4" fill="url(#oval)" stroke="#3c3c3c" stroke-width="1.1"/><ellipse cx="160" cy="414.1" rx="13" ry="5.0" fill="#f0f0f0" opacity="0.55" filter="url(#blur2)"/><polygon points="175.5,412.0 185.0,415.40000000000003 175.5,418.8" fill="#336a18" stroke="#336a18" stroke-width="2.7" stroke-linejoin="round" filter="url(#blurA)"/></g>
<text x="218.7" y="395.7" font-size="12" fill="#000" stroke="#000" stroke-width="0.12" font-weight="normal" text-anchor="start" textLength="29.5" lengthAdjust="spacingAndGlyphs" >Enum</text>
<rect x="217" y="402" width="84" height="21" fill="#b8b8b8" />
<rect x="217" y="402" width="84" height="1" fill="#e2e2e2" />
<rect x="217" y="402" width="1" height="21" fill="#e2e2e2" />
<rect x="217" y="422" width="84" height="1" fill="#6e6e6e" />
<rect x="300" y="402" width="1" height="21" fill="#6e6e6e" />
<text x="221.6" y="416.4" font-size="12" fill="#000" stroke="#000" stroke-width="0.12" font-weight="normal" text-anchor="start" >C</text>
<rect x="336" y="156" width="1" height="298" fill="#000" />
<rect x="120" y="453" width="217" height="1" fill="#000" />
<rect x="120.5" y="153.5" width="219" height="303" fill="none" stroke="#000" stroke-width="1"/>
<rect x="948" y="79" width="17" height="408" fill="url(#trackV)" />
<rect x="956" y="86" width="1" height="1" fill="#404040" />
<rect x="955" y="87" width="3" height="1" fill="#404040" />
<rect x="954" y="88" width="5" height="1" fill="#404040" />
<rect x="953" y="89" width="7" height="1" fill="#404040" />
<rect x="953" y="477" width="7" height="1" fill="#404040" />
<rect x="954" y="478" width="5" height="1" fill="#404040" />
<rect x="955" y="479" width="3" height="1" fill="#404040" />
<rect x="956" y="480" width="1" height="1" fill="#404040" />
<rect x="949.5" y="162.5" width="14" height="259" rx="2" fill="url(#thumbV)" stroke="#8f8f8f" shape-rendering="geometricPrecision"/>
<rect x="950.5" y="163.5" width="12" height="257" rx="1" fill="none" stroke="#ffffff" stroke-opacity="0.8" shape-rendering="geometricPrecision"/>
<rect x="953" y="288" width="7" height="1" fill="url(#gripH)" />
<rect x="953" y="289" width="7" height="1" fill="#fafafa" />
<rect x="953" y="291" width="7" height="1" fill="url(#gripH)" />
<rect x="953" y="292" width="7" height="1" fill="#fafafa" />
<rect x="953" y="294" width="7" height="1" fill="url(#gripH)" />
<rect x="953" y="295" width="7" height="1" fill="#fafafa" />
<rect x="10" y="487" width="938" height="17" fill="url(#trackH)" />
<rect x="16" y="495" width="1" height="1" fill="#404040" />
<rect x="17" y="494" width="1" height="3" fill="#404040" />
<rect x="18" y="493" width="1" height="5" fill="#404040" />
<rect x="19" y="492" width="1" height="7" fill="#404040" />
<rect x="938" y="492" width="1" height="7" fill="#404040" />
<rect x="939" y="493" width="1" height="5" fill="#404040" />
<rect x="940" y="494" width="1" height="3" fill="#404040" />
<rect x="941" y="495" width="1" height="1" fill="#404040" />
<rect x="159.5" y="488.5" width="770" height="14" rx="2" fill="url(#thumbH)" stroke="#8f8f8f" shape-rendering="geometricPrecision"/>
<rect x="160.5" y="489.5" width="768" height="12" rx="1" fill="none" stroke="#ffffff" stroke-opacity="0.8" shape-rendering="geometricPrecision"/>
<rect x="542" y="492" width="1" height="7" fill="url(#gripV)" />
<rect x="543" y="492" width="1" height="7" fill="#fafafa" />
<rect x="545" y="492" width="1" height="7" fill="url(#gripV)" />
<rect x="546" y="492" width="1" height="7" fill="#fafafa" />
<rect x="548" y="492" width="1" height="7" fill="url(#gripV)" />
<rect x="549" y="492" width="1" height="7" fill="#fafafa" />
<rect x="948" y="487" width="17" height="17" fill="#f0f0f0" />
<rect x="955" y="501" width="2" height="2" fill="#b8b8b8" />
<rect x="958" y="501" width="2" height="2" fill="#b8b8b8" />
<rect x="961" y="501" width="2" height="2" fill="#b8b8b8" />
<rect x="958" y="498" width="2" height="2" fill="#b8b8b8" />
<rect x="961" y="498" width="2" height="2" fill="#b8b8b8" />
<rect x="961" y="495" width="2" height="2" fill="#b8b8b8" />
<g id="bdwin">
<rect x="5.5" y="513.5" width="1108" height="558" rx="7" fill="#fafbfc" stroke="#3c4047" shape-rendering="geometricPrecision"/>
<path d="M6.5,545 L6.5,520 Q6.5,514.5 12,514.5 L90,514.5 L90,545 Z" fill="url(#bdTitle)" shape-rendering="geometricPrecision"/>
<rect x="6" y="545" width="8" height="128" fill="url(#bdLeft)" />
<rect x="6" y="673" width="8" height="390" fill="#3f78a8" />
<path d="M6,1062 L1113,1062 L1113,1064 Q1113,1071 1106,1071 L13,1071 Q6,1071 6,1064 Z" fill="#3f78a8" shape-rendering="geometricPrecision"/>
<rect x="1105" y="545" width="8" height="475" fill="#f6f7f8" />
<rect x="1105" y="1015" width="8" height="50" fill="url(#bdRight)" />
<rect x="5.5" y="513.5" width="1108" height="558" rx="7" fill="none" stroke="#3c4047" shape-rendering="geometricPrecision"/>
<rect x="6.5" y="514.5" width="1106" height="556" rx="6" fill="none" stroke="#ffffff" stroke-opacity="0.6" shape-rendering="geometricPrecision"/>
<g filter="url(#blur3)" opacity="0.3"><rect x="130" y="520" width="6" height="10" fill="#c04040"/><rect x="175" y="518" width="6" height="12" fill="#c04040"/><rect x="150" y="524" width="70" height="5" fill="#909090"/><rect x="620" y="526" width="300" height="8" fill="#c8c8c8"/></g>
<rect x="13.5" y="544.5" width="1091" height="518" fill="none" stroke="#707478" stroke-width="1"/>
<rect x="13" y="1062" width="1092" height="1" fill="#34516c" />
<rect x="13" y="560" width="1" height="503" fill="#4a6a88" />
<rect x="14" y="545" width="1090" height="517" fill="#f0f0f0" />
<rect x="14" y="565" width="1056" height="1" fill="#b4b4b4" />
<rect x="14" y="566" width="1056" height="1" fill="#fbfbfb" />
<rect x="14" y="590" width="1090" height="1" fill="#000" />
<rect x="1070" y="545" width="1" height="46" fill="#1a1a1a" />
<text x="21.3" y="557.7" font-size="12" fill="#000" stroke="#000" stroke-width="0.12" font-weight="normal" text-anchor="start" textLength="17.7" lengthAdjust="spacingAndGlyphs" >File</text>
<rect x="21" y="559" width="6" height="1" fill="#000" />
<text x="53.2" y="557.7" font-size="12" fill="#000" stroke="#000" stroke-width="0.12" font-weight="normal" text-anchor="start" textLength="19.7" lengthAdjust="spacingAndGlyphs" >Edit</text>
<rect x="53" y="559" width="7" height="1" fill="#000" />
<text x="87" y="557.7" font-size="12" fill="#000" stroke="#000" stroke-width="0.12" font-weight="normal" text-anchor="start" textLength="24.7" lengthAdjust="spacingAndGlyphs" >View</text>
<rect x="87" y="559" width="7" height="1" fill="#000" />
<text x="126.5" y="557.7" font-size="12" fill="#000" stroke="#000" stroke-width="0.12" font-weight="normal" text-anchor="start" textLength="36" lengthAdjust="spacingAndGlyphs" >Project</text>
<rect x="126" y="559" width="7" height="1" fill="#000" />
<text x="177" y="557.7" font-size="12" fill="#000" stroke="#000" stroke-width="0.12" font-weight="normal" text-anchor="start" textLength="41.7" lengthAdjust="spacingAndGlyphs" >Operate</text>
<rect x="177" y="559" width="9" height="1" fill="#000" />
<text x="233.2" y="557.7" font-size="12" fill="#000" stroke="#000" stroke-width="0.12" font-weight="normal" text-anchor="start" textLength="28.8" lengthAdjust="spacingAndGlyphs" >Tools</text>
<rect x="233" y="559" width="7" height="1" fill="#000" />
<text x="276" y="557.7" font-size="12" fill="#000" stroke="#000" stroke-width="0.12" font-weight="normal" text-anchor="start" textLength="43.6" lengthAdjust="spacingAndGlyphs" >Window</text>
<rect x="276" y="559" width="11" height="1" fill="#000" />
<text x="334.1" y="557.7" font-size="12" fill="#000" stroke="#000" stroke-width="0.12" font-weight="normal" text-anchor="start" textLength="24.3" lengthAdjust="spacingAndGlyphs" >Help</text>
<rect x="334" y="559" width="8" height="1" fill="#000" />
<text x="35.3" y="532.8" font-size="12" fill="#000" stroke="#000" stroke-width="0.12" font-weight="normal" text-anchor="start" textLength="197" lengthAdjust="spacingAndGlyphs" >LösungsVorschlag.vi Block Diagram *</text>
<rect x="16" y="521" width="13" height="14" fill="#5c5c5c" />
<rect x="17" y="522" width="1" height="2" fill="#d8d8d8" />
<rect x="17" y="532" width="1" height="2" fill="#d8d8d8" />
<rect x="19" y="522" width="1" height="2" fill="#d8d8d8" />
<rect x="19" y="532" width="1" height="2" fill="#d8d8d8" />
<rect x="21" y="522" width="1" height="2" fill="#d8d8d8" />
<rect x="21" y="532" width="1" height="2" fill="#d8d8d8" />
<rect x="23" y="522" width="1" height="2" fill="#d8d8d8" />
<rect x="23" y="532" width="1" height="2" fill="#d8d8d8" />
<rect x="25" y="522" width="1" height="2" fill="#d8d8d8" />
<rect x="25" y="532" width="1" height="2" fill="#d8d8d8" />
<rect x="27" y="522" width="1" height="2" fill="#d8d8d8" />
<rect x="27" y="532" width="1" height="2" fill="#d8d8d8" />
<rect x="17" y="524" width="11" height="8" fill="#0c140c" />
<rect x="23" y="524" width="1" height="1" fill="#00a000" />
<rect x="25" y="525" width="2" height="1" fill="#00a000" />
<rect x="26" y="527" width="1" height="2" fill="#008000" />
<rect x="22" y="531" width="1" height="1" fill="#00a000" />
<rect x="24" y="525" width="1" height="1" fill="#00c000" />
<rect x="14" y="526" width="4" height="1" fill="#f00000" />
<rect x="14" y="530" width="4" height="1" fill="#0000f0" />
<rect x="26" y="528" width="4" height="1" fill="#f00000" />
<polygon points="18,523.5 26.6,528.4 18,533" fill="url(#triG)" shape-rendering="geometricPrecision"/>
<rect x="20" y="528" width="3" height="1" fill="#333" />
<rect x="21" y="527" width="1" height="3" fill="#333" />
<path d="M1002.5,513 L1002.5,527.5 Q1002.5,532.5 1007.5,532.5 L1099.5,532.5 Q1104.5,532.5 1104.5,527.5 L1104.5,513 Z" fill="url(#capG)" stroke="#5d646e" shape-rendering="geometricPrecision"/>
<path d="M1058,514 L1058,532 L1099.5,532 Q1104,532 1104,527.5 L1104,514 Z" fill="url(#closeR)" shape-rendering="geometricPrecision"/>
<rect x="1030" y="513" width="1" height="20" fill="#5d646e" />
<rect x="1057" y="513" width="1" height="20" fill="#5d646e" />
<rect x="1010.5" y="523.5" width="12" height="4" rx="1" fill="#fff" stroke="#3c4654" shape-rendering="geometricPrecision"/>
<rect x="1037.5" y="518.5" width="12" height="9" rx="1" fill="#fff" stroke="#3c4654" shape-rendering="geometricPrecision"/>
<rect x="1040.5" y="521.5" width="6" height="3" fill="#d8dce0" stroke="#3c4654" shape-rendering="geometricPrecision"/>
<text x="1081.5" y="527.6" font-size="13" font-weight="bold" text-anchor="middle" fill="#fff" stroke="#3a2a2a" stroke-width="1.5" paint-order="stroke" textLength="10.5" lengthAdjust="spacingAndGlyphs" shape-rendering="geometricPrecision">X</text>
<rect x="65" y="568" width="22" height="21" fill="url(#btn)" />
<rect x="65.5" y="568.5" width="21" height="20" fill="none" stroke="#525252" stroke-width="1"/>
<rect x="66" y="587" width="20" height="1" fill="#9c9c9c" />
<rect x="85" y="569" width="1" height="19" fill="#9c9c9c" />
<rect x="67" y="586" width="18" height="1" fill="#d4d4d4" />
<rect x="84" y="570" width="1" height="17" fill="#d4d4d4" />
<rect x="66" y="569" width="19" height="1" fill="#ffffff" />
<rect x="66" y="569" width="1" height="18" fill="#ffffff" />
<polygon points="70.5,576.3 74.7,576.3 74.7,572.6 80.8,578.4 74.7,584.2 74.7,580.5 70.5,580.5" fill="#fff" stroke="#000" stroke-width="1.1" shape-rendering="geometricPrecision"/>
<rect x="86" y="568" width="23" height="21" fill="url(#btn)" />
<rect x="86.5" y="568.5" width="22" height="20" fill="none" stroke="#525252" stroke-width="1"/>
<rect x="87" y="587" width="21" height="1" fill="#9c9c9c" />
<rect x="107" y="569" width="1" height="19" fill="#9c9c9c" />
<rect x="88" y="586" width="19" height="1" fill="#d4d4d4" />
<rect x="106" y="570" width="1" height="17" fill="#d4d4d4" />
<rect x="87" y="569" width="20" height="1" fill="#ffffff" />
<rect x="87" y="569" width="1" height="18" fill="#ffffff" />
<g shape-rendering="geometricPrecision" fill="#fff" stroke="#000" stroke-width="1.1" stroke-linejoin="miter"><path d="M93.6,572.6 L100.2,572.6 Q103.4,572.8 103.4,576 L103.4,577.4 L105,577.4 L101.6,581 L98.2,577.4 L100.2,577.4 L100.2,576.6 Q100.2,575.6 99.2,575.6 L96.2,575.6 Z"/><path d="M100.8,584.3 L94.2,584.3 Q91,584.1 91,580.9 L91,579.5 L89.4,579.5 L92.8,575.9 L96.2,579.5 L94.2,579.5 L94.2,580.3 Q94.2,581.3 95.2,581.3 L98.2,581.3 Z"/></g>
<rect x="112" y="568" width="21" height="21" fill="#e6e6e6" />
<rect x="112.5" y="568.5" width="20" height="20" fill="none" stroke="#cfcfcf" stroke-width="1"/>
<polygon points="130.08,581.64 125.64,586.08 119.36,586.08 114.92,581.64 114.92,575.36 119.36,570.92 125.64,570.92 130.08,575.36" fill="#dcdcdc" stroke="#a4a4a4" stroke-width="0.8" shape-rendering="geometricPrecision"/>
<polygon points="128.23,580.87 124.87,584.23 120.13,584.23 116.77,580.87 116.77,576.13 120.13,572.77 124.87,572.77 128.23,576.13" fill="#e98b8b" stroke="#c9a0a0" stroke-width="0.6" shape-rendering="geometricPrecision"/>
<rect x="133" y="568" width="22" height="21" fill="url(#btn)" />
<rect x="133.5" y="568.5" width="21" height="20" fill="none" stroke="#525252" stroke-width="1"/>
<rect x="134" y="587" width="20" height="1" fill="#9c9c9c" />
<rect x="153" y="569" width="1" height="19" fill="#9c9c9c" />
<rect x="135" y="586" width="18" height="1" fill="#d4d4d4" />
<rect x="152" y="570" width="1" height="17" fill="#d4d4d4" />
<rect x="134" y="569" width="19" height="1" fill="#ffffff" />
<rect x="134" y="569" width="1" height="18" fill="#ffffff" />
<rect x="139" y="573" width="4" height="10" fill="#000" />
<rect x="145" y="573" width="4" height="10" fill="#000" />
<rect x="159" y="568" width="23" height="21" fill="url(#btn)" />
<rect x="159.5" y="568.5" width="22" height="20" fill="none" stroke="#525252" stroke-width="1"/>
<rect x="160" y="587" width="21" height="1" fill="#9c9c9c" />
<rect x="180" y="569" width="1" height="19" fill="#9c9c9c" />
<rect x="161" y="586" width="19" height="1" fill="#d4d4d4" />
<rect x="179" y="570" width="1" height="17" fill="#d4d4d4" />
<rect x="160" y="569" width="20" height="1" fill="#ffffff" />
<rect x="160" y="569" width="1" height="18" fill="#ffffff" />
<g shape-rendering="geometricPrecision" stroke-linecap="round"><path d="M167.3,581.3 L166.6,579.2 Q164.4,577.6 164.6,575.3 Q165,571 169.6,570.8 Q174.2,571 174.6,575.3 Q174.8,577.6 172.6,579.2 L171.9,581.3 Z" fill="#fff" stroke="#000" stroke-width="1.1"/><path d="M167,574 L169.6,577.6 L172.2,574 M169.6,577.6 L169.6,581" fill="none" stroke="#000" stroke-width="0.9"/><rect x="167" y="581.5" width="5.2" height="4.2" fill="#f2b400" stroke="#3a2a00" stroke-width="0.8"/><path d="M167,583 L172.2,583 M167,584.5 L172.2,584.5" stroke="#3a2a00" stroke-width="0.6"/></g>
<rect x="185" y="568" width="23" height="21" fill="url(#btn)" />
<rect x="185.5" y="568.5" width="22" height="20" fill="none" stroke="#525252" stroke-width="1"/>
<rect x="186" y="587" width="21" height="1" fill="#9c9c9c" />
<rect x="206" y="569" width="1" height="19" fill="#9c9c9c" />
<rect x="187" y="586" width="19" height="1" fill="#d4d4d4" />
<rect x="205" y="570" width="1" height="17" fill="#d4d4d4" />
<rect x="186" y="569" width="20" height="1" fill="#ffffff" />
<rect x="186" y="569" width="1" height="18" fill="#ffffff" />
<g shape-rendering="geometricPrecision"><circle cx="191.4" cy="575.2" r="3.2" fill="#fff" stroke="#000"/><polygon points="190.4,573.6 193,575.2 190.4,576.8" fill="#000"/><rect x="196.5" y="573.5" width="7.5" height="4.6" fill="#c4c4c4" stroke="#8a8a8a"/><path d="M191.4,578.4 L191.4,583.5 M189.4,581 L193.4,581" stroke="#000" fill="none"/><path d="M188,583.5 L200,583.5" stroke="#0000e0" fill="none" stroke-width="1.2"/><rect x="194.5" y="581.3" width="3.6" height="4.2" fill="#fff" stroke="#000" stroke-width="0.9"/><polygon points="200,580.4 204.6,583.5 200,586.6" fill="#00a800"/></g>
<rect x="211" y="568" width="22" height="21" fill="url(#btn)" />
<rect x="211.5" y="568.5" width="21" height="20" fill="none" stroke="#525252" stroke-width="1"/>
<rect x="212" y="587" width="20" height="1" fill="#9c9c9c" />
<rect x="231" y="569" width="1" height="19" fill="#9c9c9c" />
<rect x="213" y="586" width="18" height="1" fill="#d4d4d4" />
<rect x="230" y="570" width="1" height="17" fill="#d4d4d4" />
<rect x="212" y="569" width="19" height="1" fill="#ffffff" />
<rect x="212" y="569" width="1" height="18" fill="#ffffff" />
<g shape-rendering="geometricPrecision"><path d="M215.6,571.5 L215.6,580.4 L219.5,580.4" stroke="#222" stroke-width="2" fill="none"/><polygon points="219,576.6 223.4,580.4 219,584.2" fill="#222"/><rect x="223" y="578.3" width="6.4" height="6.4" fill="#fbf6a0" stroke="#000" stroke-width="1.5"/></g>
<rect x="232" y="568" width="22" height="21" fill="url(#btn)" />
<rect x="232.5" y="568.5" width="21" height="20" fill="none" stroke="#525252" stroke-width="1"/>
<rect x="233" y="587" width="20" height="1" fill="#9c9c9c" />
<rect x="252" y="569" width="1" height="19" fill="#9c9c9c" />
<rect x="234" y="586" width="18" height="1" fill="#d4d4d4" />
<rect x="251" y="570" width="1" height="17" fill="#d4d4d4" />
<rect x="233" y="569" width="19" height="1" fill="#ffffff" />
<rect x="233" y="569" width="1" height="18" fill="#ffffff" />
<g shape-rendering="geometricPrecision"><path d="M236.2,581 L236.2,574.2 L246.5,574.2" stroke="#222" stroke-width="2.2" fill="none"/><polygon points="246,570.4 250.8,574.2 246,578" fill="#222"/><path d="M238,577.4 L246.6,577.4 L246.6,585.4" stroke="#000" stroke-width="1.3" fill="none"/><rect x="238.6" y="579" width="6" height="6" fill="#fbf6a0" stroke="#000" stroke-width="1.5"/></g>
<rect x="253" y="568" width="22" height="21" fill="#ededed" />
<rect x="253.5" y="568.5" width="21" height="20" fill="none" stroke="#cfcfcf" stroke-width="1"/>
<g shape-rendering="geometricPrecision"><rect x="257.5" y="578.5" width="5.5" height="5.5" fill="#f2f2c8" stroke="#b4b4b4"/><path d="M263.5,582.6 L268.6,582.6 L268.6,576" stroke="#b8b8b8" stroke-width="2.2" fill="none"/><polygon points="264.8,576.6 268.6,571.6 272.4,576.6" fill="#b8b8b8"/></g>
<rect x="278" y="568" width="148" height="21" fill="#ffffff" />
<rect x="278" y="568" width="148" height="1" fill="#6e6e6e" />
<rect x="278" y="568" width="1" height="21" fill="#6e6e6e" />
<rect x="278" y="588" width="148" height="1" fill="#4a4a4a" />
<rect x="425" y="568" width="1" height="21" fill="#4a4a4a" />
<rect x="279" y="587" width="146" height="1" fill="#b0b0b0" />
<rect x="424" y="569" width="1" height="19" fill="#b0b0b0" />
<rect x="407" y="569" width="17" height="19" fill="url(#btn)" />
<rect x="407" y="570" width="1" height="17" fill="#7a7a7a" />
<rect x="414" y="577" width="5" height="1" fill="#000" />
<rect x="415" y="578" width="3" height="1" fill="#000" />
<rect x="416" y="579" width="1" height="1" fill="#000" />
<text x="284.4" y="582" font-size="12" fill="#000" stroke="#000" stroke-width="0.12" font-weight="normal" text-anchor="start" textLength="113.5" lengthAdjust="spacingAndGlyphs" >15pt Application Font</text>
<rect x="429" y="568" width="33" height="21" fill="url(#btn)" />
<rect x="429.5" y="568.5" width="32" height="20" fill="none" stroke="#525252" stroke-width="1"/>
<rect x="430" y="587" width="31" height="1" fill="#9c9c9c" />
<rect x="460" y="569" width="1" height="19" fill="#9c9c9c" />
<rect x="431" y="586" width="29" height="1" fill="#d4d4d4" />
<rect x="459" y="570" width="1" height="17" fill="#d4d4d4" />
<rect x="430" y="569" width="30" height="1" fill="#ffffff" />
<rect x="430" y="569" width="1" height="18" fill="#ffffff" />
<rect x="433.5" y="573.5" width="4" height="4" fill="#00d000" stroke="#004000" stroke-width="1"/>
<rect x="435" y="578" width="1" height="5" fill="#000" />
<rect x="433" y="580" width="5" height="1" fill="#000" />
<rect x="434" y="581" width="3" height="1" fill="#000" />
<rect x="440.5" y="578.5" width="7" height="4" fill="#f8f060" stroke="#404000" stroke-width="1"/>
<line x1="433" y1="583.5" x2="448" y2="583.5" stroke="#000" stroke-dasharray="1 1"/>
<rect x="451" y="577" width="5" height="1" fill="#000" />
<rect x="452" y="578" width="3" height="1" fill="#000" />
<rect x="453" y="579" width="1" height="1" fill="#000" />
<rect x="465" y="568" width="33" height="21" fill="url(#btn)" />
<rect x="465.5" y="568.5" width="32" height="20" fill="none" stroke="#525252" stroke-width="1"/>
<rect x="466" y="587" width="31" height="1" fill="#9c9c9c" />
<rect x="496" y="569" width="1" height="19" fill="#9c9c9c" />
<rect x="467" y="586" width="29" height="1" fill="#d4d4d4" />
<rect x="495" y="570" width="1" height="17" fill="#d4d4d4" />
<rect x="466" y="569" width="30" height="1" fill="#ffffff" />
<rect x="466" y="569" width="1" height="18" fill="#ffffff" />
<path d="M468.5,573.5 Q468.5,572.5 470,572.5 L475,572.5 L476,571.5 L477,572.5 L482,572.5 Q483.5,572.5 483.5,573.5" stroke="#000" fill="none" stroke-width="0.9" shape-rendering="geometricPrecision"/>
<rect x="469" y="578" width="3" height="3" fill="#000" />
<rect x="473.5" y="576.5" width="3" height="7" fill="#f8f060" stroke="#404000" stroke-width="1"/>
<rect x="478.5" y="579.5" width="5" height="4" fill="#00d000" stroke="#004000" stroke-width="1"/>
<rect x="486" y="577" width="5" height="1" fill="#000" />
<rect x="487" y="578" width="3" height="1" fill="#000" />
<rect x="488" y="579" width="1" height="1" fill="#000" />
<rect x="504" y="568" width="33" height="21" fill="url(#btn)" />
<rect x="504.5" y="568.5" width="32" height="20" fill="none" stroke="#525252" stroke-width="1"/>
<rect x="505" y="587" width="31" height="1" fill="#9c9c9c" />
<rect x="535" y="569" width="1" height="19" fill="#9c9c9c" />
<rect x="506" y="586" width="29" height="1" fill="#d4d4d4" />
<rect x="534" y="570" width="1" height="17" fill="#d4d4d4" />
<rect x="505" y="569" width="30" height="1" fill="#ffffff" />
<rect x="505" y="569" width="1" height="18" fill="#ffffff" />
<g shape-rendering="geometricPrecision"><ellipse cx="514.8" cy="576.9" rx="6.3" ry="4.6" fill="none" stroke="url(#ringG)" stroke-width="2.6"/><polygon points="518.0,569.3 513.1999999999999,572.5 518.0,576.3" fill="#111"/><polygon points="511.4,570.3 508.19999999999993,572.9 511.4,575.5" fill="#222"/><polygon points="512.4,577.6999999999999 517.0,581.3 512.4,584.9" fill="#a8a8a8"/><path d="M513.4,577.9 L516.4,581.3 L513.4,584.6999999999999" fill="none" stroke="#fff" stroke-width="0.9"/></g>
<rect x="525" y="577" width="5" height="1" fill="#000" />
<rect x="526" y="578" width="3" height="1" fill="#000" />
<rect x="527" y="579" width="1" height="1" fill="#000" />
<rect x="540" y="568" width="25" height="21" fill="url(#btn)" />
<rect x="540.5" y="568.5" width="24" height="20" fill="none" stroke="#525252" stroke-width="1"/>
<rect x="541" y="587" width="23" height="1" fill="#9c9c9c" />
<rect x="563" y="569" width="1" height="19" fill="#9c9c9c" />
<rect x="542" y="586" width="21" height="1" fill="#d4d4d4" />
<rect x="562" y="570" width="1" height="17" fill="#d4d4d4" />
<rect x="541" y="569" width="22" height="1" fill="#ffffff" />
<rect x="541" y="569" width="1" height="18" fill="#ffffff" />
<g shape-rendering="geometricPrecision"><polygon points="543.5,572.5 550.5,576 543.5,579.5" fill="#f4f000" stroke="#0000c0" stroke-width="0.8"/><path d="M558.5,570 L558.5,578" stroke="#6a4a20" stroke-width="1.6"/><path d="M548,584.5 Q553,577 561.5,578.5 L562,584.5 Z" fill="#a07840" stroke="#5a3c14" stroke-width="0.8"/><path d="M543,575.5 L541.5,575.5 M550.5,576 L553,576" stroke="#e00000"/></g>
<rect x="1045" y="568" width="22" height="21" fill="#c2c2c2" />
<rect x="1045.5" y="568.5" width="21" height="20" fill="none" stroke="#4e4e4e" stroke-width="1"/>
<rect x="1046" y="569" width="20" height="1" fill="#d6d6d6" />
<rect x="1046" y="569" width="1" height="19" fill="#d6d6d6" />
<rect x="1046" y="587" width="20" height="1" fill="#8c8c8c" />
<rect x="1065" y="569" width="1" height="19" fill="#8c8c8c" />
<rect x="1047" y="586" width="18" height="1" fill="#ababab" />
<rect x="1064" y="570" width="1" height="17" fill="#ababab" />
<text x="1055.9" y="585.4" font-size="19.5" font-weight="bold" text-anchor="middle" fill="#ffff84" stroke="#000" stroke-width="2" stroke-linejoin="round" paint-order="stroke" textLength="10.5" lengthAdjust="spacingAndGlyphs" shape-rendering="geometricPrecision">?</text>
<rect x="1071" y="551" width="32" height="32" fill="#000" />
<rect x="1072" y="552" width="30" height="30" fill="#fff" />
<rect x="1074" y="554" width="19" height="16" fill="#000" />
<rect x="1075" y="555" width="17" height="14" fill="#c8c8c0" />
<rect x="1085" y="555" width="7" height="10" fill="#d6d6a0" />
<rect x="1075" y="565" width="17" height="4" fill="#d6d6a0" />
<rect x="1076" y="556" width="11" height="8" fill="#000" />
<path d="M1076.5,561.5 Q1078,554.5 1080,560 T1083.5,559 T1086.5,561" stroke="#00d000" stroke-width="1.3" fill="none" shape-rendering="geometricPrecision"/>
<rect x="1088" y="556" width="1" height="2" fill="#555" />
<rect x="1090" y="556" width="1" height="2" fill="#555" />
<ellipse cx="1089.5" cy="561.5" rx="1.4" ry="2" fill="#f8c890" stroke="#444" stroke-width="0.7" shape-rendering="geometricPrecision"/>
<path d="M1076.5,566 L1076.5,569 L1079.5,572.5 L1083.5,573.5 L1086,570.5 L1090,570.5" stroke="#0000a0" stroke-width="1.2" fill="none" shape-rendering="geometricPrecision"/>
<path d="M1083,567 L1080.5,570 L1082,572 L1084,570 L1085.5,567.5 L1090,566.5" stroke="#f00000" stroke-width="1.2" fill="none" stroke-dasharray="2.2 0.8" shape-rendering="geometricPrecision"/>
<polygon points="1090.3,564.4 1098.6,568.6 1090.3,572.8" fill="#f4f000" stroke="#8a8400" stroke-width="0.8" shape-rendering="geometricPrecision"/>
<rect x="1092" y="568" width="3" height="1" fill="#000" />
<rect x="1093" y="567" width="1" height="3" fill="#000" />
<rect x="1099" y="568" width="2" height="1" fill="#f00000" />
<text x="1095.3" y="579.8" font-size="9.5" fill="#000" stroke="#000" stroke-width="0.12" font-weight="normal" text-anchor="start" >1</text>
<rect x="14" y="591" width="1073" height="454" fill="#ffffff" />
</g>
<rect x="249" y="986" width="449" height="1" fill="#000" />
<rect x="697" y="663" width="1" height="324" fill="#000" />
<rect x="247" y="984" width="449" height="1" fill="#000" />
<rect x="695" y="661" width="1" height="324" fill="#000" />
<rect x="245" y="659" width="449" height="324" fill="#fff" />
<rect x="245" y="659" width="449" height="1" fill="#000" />
<rect x="245" y="659" width="1" height="324" fill="#000" />
<rect x="693" y="659" width="1" height="316" fill="#000" />
<rect x="245" y="982" width="441" height="1" fill="#000" />
<rect x="685" y="974" width="9" height="1" fill="#000" />
<rect x="685" y="974" width="1" height="9" fill="#000" />
<line x1="685.5" y1="982.5" x2="693.5" y2="974.5" stroke="#000" shape-rendering="geometricPrecision"/>
<rect x="771" y="992" width="312" height="1" fill="#000" />
<rect x="1082" y="661" width="1" height="332" fill="#000" />
<rect x="769" y="990" width="312" height="1" fill="#000" />
<rect x="1080" y="659" width="1" height="332" fill="#000" />
<rect x="767" y="657" width="312" height="332" fill="#fff" />
<rect x="767" y="657" width="312" height="1" fill="#000" />
<rect x="767" y="657" width="1" height="332" fill="#000" />
<rect x="1078" y="657" width="1" height="324" fill="#000" />
<rect x="767" y="988" width="304" height="1" fill="#000" />
<rect x="1070" y="980" width="9" height="1" fill="#000" />
<rect x="1070" y="980" width="1" height="9" fill="#000" />
<line x1="1070.5" y1="988.5" x2="1078.5" y2="980.5" stroke="#000" shape-rendering="geometricPrecision"/>
<rect x="245" y="659" width="16" height="16" fill="#0000ff" />
<rect x="247" y="661" width="12" height="12" fill="#ffffcc" />
<text x="253" y="671.3" font-size="11" fill="#0000ff" stroke="#0000ff" stroke-width="0.12" font-weight="bold" text-anchor="middle" >N</text>
<rect x="767" y="657" width="16" height="16" fill="#0000ff" />
<rect x="769" y="659" width="12" height="12" fill="#ffffcc" />
<text x="775" y="669.3" font-size="11" fill="#0000ff" stroke="#0000ff" stroke-width="0.12" font-weight="bold" text-anchor="middle" >N</text>
<rect x="255" y="961" width="16" height="16" fill="#0000ff" />
<rect x="257" y="963" width="12" height="12" fill="#fff" />
<text x="263" y="973.5" font-size="12" fill="#0000ff" stroke="#0000ff" stroke-width="0.12" font-weight="bold" text-anchor="middle" >i</text>
<rect x="777" y="968" width="16" height="16" fill="#0000ff" />
<rect x="779" y="970" width="12" height="12" fill="#fff" />
<text x="785" y="980.5" font-size="12" fill="#0000ff" stroke="#0000ff" stroke-width="0.12" font-weight="bold" text-anchor="middle" >i</text>
<rect x="444" y="708" width="191" height="215" fill="url(#chk)" />
<rect x="450" y="714" width="179" height="203" fill="#fff" />
<rect x="444.5" y="708.5" width="190" height="214" fill="none" stroke="#000" stroke-width="1"/>
<rect x="825" y="691" width="216" height="249" fill="url(#chk2)" />
<rect x="831" y="697" width="204" height="237" fill="#fff" />
<rect x="825.5" y="691.5" width="215" height="248" fill="none" stroke="#000" stroke-width="1"/>
<rect x="508" y="708" width="63" height="17" fill="#fff" />
<rect x="508.5" y="708.5" width="62" height="16" fill="none" stroke="#000" stroke-width="1"/>
<rect x="516" y="708" width="1" height="17" fill="#000" />
<rect x="562" y="708" width="1" height="17" fill="#000" />
<rect x="510" y="716" width="1" height="1" fill="#000" />
<rect x="511" y="715" width="1" height="3" fill="#000" />
<rect x="512" y="714" width="1" height="5" fill="#000" />
<rect x="513" y="713" width="1" height="7" fill="#000" />
<rect x="511" y="716" width="1" height="1" fill="#000" />
<rect x="512" y="715" width="1" height="3" fill="#000" />
<rect x="513" y="714" width="1" height="5" fill="#000" />
<rect x="514" y="713" width="1" height="7" fill="#000" />
<rect x="564" y="713" width="1" height="9" fill="#000" />
<rect x="565" y="714" width="1" height="7" fill="#000" />
<rect x="566" y="715" width="1" height="5" fill="#000" />
<rect x="567" y="716" width="1" height="3" fill="#000" />
<rect x="568" y="717" width="1" height="1" fill="#000" />
<rect x="553" y="714" width="7" height="1" fill="#000" />
<rect x="554" y="715" width="5" height="1" fill="#000" />
<rect x="555" y="716" width="3" height="1" fill="#000" />
<rect x="556" y="717" width="1" height="1" fill="#000" />
<text x="520.4" y="720.8" font-size="12" fill="#000" stroke="#000" stroke-width="0.12" font-weight="normal" text-anchor="start" textLength="23.4" lengthAdjust="spacingAndGlyphs" >True</text>
<rect x="905" y="691" width="55" height="17" fill="#fff" />
<rect x="905.5" y="691.5" width="54" height="16" fill="none" stroke="#000" stroke-width="1"/>
<rect x="913" y="691" width="1" height="17" fill="#000" />
<rect x="951" y="691" width="1" height="17" fill="#000" />
<rect x="907" y="699" width="1" height="1" fill="#000" />
<rect x="908" y="698" width="1" height="3" fill="#000" />
<rect x="909" y="697" width="1" height="5" fill="#000" />
<rect x="910" y="696" width="1" height="7" fill="#000" />
<rect x="908" y="699" width="1" height="1" fill="#000" />
<rect x="909" y="698" width="1" height="3" fill="#000" />
<rect x="910" y="697" width="1" height="5" fill="#000" />
<rect x="911" y="696" width="1" height="7" fill="#000" />
<rect x="953" y="696" width="1" height="9" fill="#000" />
<rect x="954" y="697" width="1" height="7" fill="#000" />
<rect x="955" y="698" width="1" height="5" fill="#000" />
<rect x="956" y="699" width="1" height="3" fill="#000" />
<rect x="957" y="700" width="1" height="1" fill="#000" />
<rect x="942" y="697" width="7" height="1" fill="#000" />
<rect x="943" y="698" width="5" height="1" fill="#000" />
<rect x="944" y="699" width="3" height="1" fill="#000" />
<rect x="945" y="700" width="1" height="1" fill="#000" />
<text x="917.6" y="703.7" font-size="12" fill="#000" stroke="#000" stroke-width="0.12" font-weight="normal" text-anchor="start" textLength="17" lengthAdjust="spacingAndGlyphs" >"A"</text>
<line x1="172" y1="729.5" x2="246" y2="729.5" stroke="#008000" stroke-dasharray="1 1"/>
<line x1="254" y1="729.5" x2="390" y2="729.5" stroke="#008000" stroke-dasharray="1 1"/>
<line x1="389.5" y1="729" x2="389.5" y2="818" stroke="#008000" stroke-dasharray="1 1"/>
<line x1="389" y1="817.5" x2="399" y2="817.5" stroke="#008000" stroke-dasharray="1 1"/>
<line x1="369" y1="825.5" x2="399" y2="825.5" stroke="#008000" stroke-dasharray="1 1"/>
<line x1="418" y1="821.5" x2="445" y2="821.5" stroke="#008000" stroke-dasharray="1 1"/>
<rect x="237" y="794" width="8" height="2" fill="#0000ff" />
<rect x="261" y="794" width="127" height="2" fill="#0000ff" />
<rect x="391" y="794" width="53" height="2" fill="#0000ff" />
<rect x="452" y="794" width="78" height="2" fill="#0000ff" />
<rect x="561" y="796" width="65" height="2" fill="#0000ff" />
<rect x="635" y="796" width="47" height="2" fill="#0000ff" />
<rect x="698" y="794" width="69" height="2" fill="#0000ff" />
<rect x="369" y="844" width="76" height="1" fill="#0000ff" />
<rect x="453" y="844" width="24" height="1" fill="#0000ff" />
<rect x="476" y="802" width="1" height="43" fill="#0000ff" />
<rect x="476" y="802" width="54" height="1" fill="#0000ff" />
<rect x="776" y="795" width="50" height="1" fill="#0000ff" />
<rect x="182" y="835" width="63" height="3" fill="url(#hatch)" />
<rect x="254" y="835" width="47" height="3" fill="#ff00ff" />
<line x1="255" y1="836.5" x2="301" y2="836.5" stroke="#fff" stroke-width="1" stroke-dasharray="2 2"/>
<text x="140.3" y="716.7" font-size="12" fill="#000" stroke="#000" stroke-width="0.12" font-weight="normal" text-anchor="start" textLength="78.7" lengthAdjust="spacingAndGlyphs" >Alle auswählen</text>
<rect x="139" y="721" width="32" height="16" fill="#008000" />
<rect x="141" y="723" width="28" height="12" fill="#fff" />
<rect x="142.5" y="724.5" width="25" height="9" fill="#fff" stroke="#008000" stroke-width="1"/>
<rect x="161" y="723" width="8" height="12" fill="#a9d3a9" />
<rect x="169" y="723" width="2" height="12" fill="#4c9c4c" />
<rect x="161" y="724" width="7" height="1" fill="#6cb46c" />
<rect x="161" y="733" width="7" height="1" fill="#6cb46c" />
<text x="148.8" y="731.8" font-size="8.6" fill="#008000" stroke="#008000" stroke-width="0.12" font-weight="bold" text-anchor="start" textLength="12.4" lengthAdjust="spacingAndGlyphs" >TF</text>
<rect x="166" y="726" width="1" height="7" fill="#000" />
<rect x="167" y="727" width="1" height="5" fill="#000" />
<rect x="168" y="728" width="1" height="3" fill="#000" />
<rect x="169" y="729" width="1" height="1" fill="#000" />
<rect x="245.5" y="725.5" width="8" height="8" fill="#008000" stroke="#000" stroke-width="1"/>
<rect x="164.5" y="783.5" width="31" height="20" fill="#fff" stroke="#0000ff" stroke-width="1"/>
<rect x="166.5" y="785.5" width="27" height="16" fill="#fff" stroke="#0000ff" stroke-width="1"/>
<rect x="173" y="785" width="1" height="17" fill="#0000ff" />
<rect x="167" y="793" width="6" height="1" fill="#0000ff" />
<rect x="167" y="794" width="6" height="1" fill="#0000ff" />
<rect x="170" y="787" width="1" height="1" fill="#0000ff" />
<rect x="169" y="788" width="3" height="1" fill="#0000ff" />
<rect x="168" y="789" width="5" height="1" fill="#0000ff" />
<rect x="170" y="789" width="1" height="3" fill="#0000ff" />
<rect x="168" y="798" width="5" height="1" fill="#0000ff" />
<rect x="169" y="799" width="3" height="1" fill="#0000ff" />
<rect x="170" y="800" width="1" height="1" fill="#0000ff" />
<rect x="170" y="796" width="1" height="3" fill="#0000ff" />
<text x="174.6" y="798" font-size="12.5" fill="#000" stroke="#000" stroke-width="0.12" font-weight="normal" text-anchor="start" textLength="5.8" lengthAdjust="spacingAndGlyphs" >0</text>
<rect x="196.5" y="783.5" width="40" height="24" fill="#fff" stroke="#0000ff" stroke-width="1"/>
<rect x="198" y="785" width="37" height="21" fill="#8888ff" />
<rect x="200" y="787" width="33" height="17" fill="#d8d8ff" />
<rect x="201" y="788" width="31" height="15" fill="#fbfbff" />
<text x="211.6" y="799.7" font-size="12" fill="#a6a6a6" stroke="#a6a6a6" stroke-width="0.12" font-weight="normal" text-anchor="start" textLength="7" lengthAdjust="spacingAndGlyphs" >A</text>
<rect x="202" y="795" width="1" height="1" fill="#a0a0ff" />
<rect x="203" y="794" width="1" height="3" fill="#a0a0ff" />
<rect x="204" y="793" width="1" height="5" fill="#a0a0ff" />
<rect x="206" y="793" width="1" height="5" fill="#a0a0ff" />
<rect x="207" y="794" width="1" height="3" fill="#a0a0ff" />
<rect x="208" y="795" width="1" height="1" fill="#a0a0ff" />
<rect x="224" y="793" width="7" height="1" fill="#9090ff" />
<rect x="225" y="794" width="5" height="1" fill="#9090ff" />
<rect x="226" y="795" width="3" height="1" fill="#9090ff" />
<rect x="227" y="796" width="1" height="1" fill="#9090ff" />
<rect x="245" y="789" width="16" height="12" fill="#0000ff" />
<rect x="247" y="791" width="12" height="8" fill="#ffffcc" />
<rect x="249" y="793" width="9" height="1" fill="#0000ff" />
<rect x="250" y="794" width="7" height="1" fill="#0000ff" />
<rect x="251" y="795" width="5" height="1" fill="#0000ff" />
<rect x="252" y="796" width="3" height="1" fill="#0000ff" />
<rect x="253" y="797" width="1" height="1" fill="#0000ff" />
<rect x="682" y="789" width="16" height="12" fill="#0000ff" />
<rect x="684" y="791" width="12" height="8" fill="#ffffcc" />
<rect x="690" y="792" width="1" height="1" fill="#0000ff" />
<rect x="689" y="793" width="3" height="1" fill="#0000ff" />
<rect x="688" y="794" width="5" height="1" fill="#0000ff" />
<rect x="687" y="795" width="7" height="1" fill="#0000ff" />
<rect x="686" y="796" width="9" height="1" fill="#0000ff" />
<text x="151.2" y="823.8" font-size="12" fill="#000" stroke="#000" stroke-width="0.12" font-weight="normal" text-anchor="start" textLength="27.6" lengthAdjust="spacingAndGlyphs" >Array</text>
<rect x="150" y="828" width="32" height="16" fill="#ff00ff" />
<rect x="152" y="830" width="28" height="12" fill="#fff" />
<rect x="172" y="830" width="8" height="12" fill="#ffb4ff" />
<rect x="180" y="830" width="2" height="12" fill="#ff60ff" />
<rect x="155" y="831" width="1" height="9" fill="#ff00ff" />
<rect x="155" y="831" width="3" height="1" fill="#ff00ff" />
<rect x="155" y="839" width="3" height="1" fill="#ff00ff" />
<rect x="159.5" y="833.5" width="4" height="2" fill="#fff" stroke="#ff00ff" stroke-width="1"/>
<rect x="158" y="837" width="4" height="2" fill="#ff00ff" />
<rect x="164" y="836" width="4" height="3" fill="#ff00ff" />
<rect x="165" y="833" width="3" height="1" fill="#ff00ff" />
<rect x="171" y="832" width="2" height="2" fill="#ff00ff" />
<rect x="171.5" y="836.5" width="2" height="2" fill="#fff" stroke="#ff00ff" stroke-width="1"/>
<rect x="176" y="831" width="1" height="9" fill="#ff40ff" />
<rect x="174" y="831" width="3" height="1" fill="#ff40ff" />
<rect x="174" y="839" width="3" height="1" fill="#ff40ff" />
<rect x="177" y="833" width="1" height="7" fill="#000" />
<rect x="178" y="834" width="1" height="5" fill="#000" />
<rect x="179" y="835" width="1" height="3" fill="#000" />
<rect x="180" y="836" width="1" height="1" fill="#000" />
<rect x="245.5" y="832.5" width="8" height="8" fill="#ffffcc" stroke="#000" stroke-width="1"/>
<text x="247" y="838.8" font-size="7.5" fill="#ff00ff" stroke="#ff00ff" stroke-width="0.12" font-weight="bold" text-anchor="start" textLength="5.6" lengthAdjust="spacingAndGlyphs" >[]</text>
<rect x="301.5" y="819.5" width="67" height="34" fill="#fff" stroke="#000" stroke-width="1"/>
<rect x="302" y="820" width="15" height="33" fill="#ffffcc" />
<rect x="317" y="819" width="1" height="35" fill="#000" />
<rect x="317" y="836" width="52" height="1" fill="#000" />
<rect x="302" y="835" width="7" height="3" fill="#000" />
<rect x="308" y="832" width="1" height="9" fill="#000" />
<rect x="309" y="833" width="1" height="7" fill="#000" />
<rect x="310" y="834" width="1" height="5" fill="#000" />
<rect x="311" y="835" width="1" height="3" fill="#000" />
<rect x="312" y="836" width="1" height="1" fill="#000" />
<text x="321.6" y="831.7" font-size="12" fill="#008000" stroke="#008000" stroke-width="0.12" font-weight="normal" text-anchor="start" textLength="41.9" lengthAdjust="spacingAndGlyphs" >Boolean</text>
<text x="327.6" y="848.6" font-size="12" fill="#0000ff" stroke="#0000ff" stroke-width="0.12" font-weight="normal" text-anchor="start" textLength="29.5" lengthAdjust="spacingAndGlyphs" >Enum</text>
<path d="M395.5,813.5 L406,813.5 Q412.5,814.5 417,821 Q412.5,827.5 406,828.5 L395.5,828.5 Q400.5,821 395.5,813.5 Z" fill="#fffbd0" stroke="#000" stroke-width="1.1" shape-rendering="geometricPrecision"/>
<text x="406" y="824.6" font-size="11" fill="#000" stroke="#000" stroke-width="0.12" font-weight="bold" text-anchor="middle" >v</text>
<rect x="444.5" y="815.5" width="7" height="11" fill="#ffffe8" stroke="#008000" stroke-width="1"/>
<text x="448" y="825" font-size="10" fill="#008000" stroke="#008000" stroke-width="0.12" font-weight="normal" text-anchor="middle" >?</text>
<rect x="444.5" y="791.5" width="8" height="8" fill="#0000ff" stroke="#000" stroke-width="1"/>
<rect x="444.5" y="840.5" width="8" height="8" fill="#0000ff" stroke="#000" stroke-width="1"/>
<rect x="626.5" y="793.5" width="8" height="8" fill="#0000ff" stroke="#000" stroke-width="1"/>
<rect x="529.5" y="790.5" width="31" height="16" fill="#ffffcc" stroke="#000" stroke-width="1"/>
<rect x="531.5" y="792.5" width="8" height="4" fill="#ffffcc" stroke="#000" stroke-width="1"/>
<rect x="533" y="794" width="1" height="1" fill="#000" />
<rect x="537" y="794" width="1" height="1" fill="#000" />
<rect x="532.5" y="800.5" width="4" height="4" fill="#ffffcc" stroke="#000" stroke-width="1"/>
<rect x="542" y="794" width="3" height="1" fill="#000" />
<rect x="543" y="793" width="1" height="3" fill="#000" />
<rect x="538" y="802" width="1" height="1" fill="#000" />
<rect x="540" y="802" width="1" height="1" fill="#000" />
<rect x="542" y="802" width="3" height="1" fill="#000" />
<rect x="543" y="801" width="1" height="3" fill="#000" />
<path d="M548,791.5 Q546.2,793 546.5,798 Q546.2,803.5 548,805.5" stroke="#000" fill="none" shape-rendering="geometricPrecision"/>
<rect x="549.5" y="792.5" width="8" height="12" fill="#ffffcc" stroke="#000" stroke-width="1"/>
<rect x="553" y="792" width="1" height="13" fill="#000" />
<rect x="549" y="796" width="9" height="1" fill="#000" />
<rect x="549" y="800" width="9" height="1" fill="#000" />
<rect x="767.5" y="791.5" width="8" height="8" fill="#ffffcc" stroke="#000" stroke-width="1"/>
<text x="769" y="797.8" font-size="7.5" fill="#0000ff" stroke="#0000ff" stroke-width="0.12" font-weight="bold" text-anchor="start" textLength="5.6" lengthAdjust="spacingAndGlyphs" >[]</text>
<rect x="825.5" y="789.5" width="7" height="11" fill="#ffffe8" stroke="#0000ff" stroke-width="1"/>
<text x="829" y="799" font-size="10" fill="#0000ff" stroke="#0000ff" stroke-width="0.12" font-weight="normal" text-anchor="middle" >?</text>
<rect x="1087" y="591" width="17" height="454" fill="url(#trackV)" />
<rect x="1095" y="598" width="1" height="1" fill="#404040" />
<rect x="1094" y="599" width="3" height="1" fill="#404040" />
<rect x="1093" y="600" width="5" height="1" fill="#404040" />
<rect x="1092" y="601" width="7" height="1" fill="#404040" />
<rect x="1092" y="1036" width="7" height="1" fill="#404040" />
<rect x="1093" y="1037" width="5" height="1" fill="#404040" />
<rect x="1094" y="1038" width="3" height="1" fill="#404040" />
<rect x="1095" y="1039" width="1" height="1" fill="#404040" />
<rect x="1088.5" y="644.5" width="14" height="336" rx="2" fill="url(#thumbV)" stroke="#8f8f8f" shape-rendering="geometricPrecision"/>
<rect x="1089.5" y="645.5" width="12" height="334" rx="1" fill="none" stroke="#ffffff" stroke-opacity="0.8" shape-rendering="geometricPrecision"/>
<rect x="1092" y="809" width="7" height="1" fill="url(#gripH)" />
<rect x="1092" y="810" width="7" height="1" fill="#fafafa" />
<rect x="1092" y="812" width="7" height="1" fill="url(#gripH)" />
<rect x="1092" y="813" width="7" height="1" fill="#fafafa" />
<rect x="1092" y="815" width="7" height="1" fill="url(#gripH)" />
<rect x="1092" y="816" width="7" height="1" fill="#fafafa" />
<rect x="14" y="1045" width="1073" height="17" fill="url(#trackH)" />
<rect x="20" y="1053" width="1" height="1" fill="#404040" />
<rect x="21" y="1052" width="1" height="3" fill="#404040" />
<rect x="22" y="1051" width="1" height="5" fill="#404040" />
<rect x="23" y="1050" width="1" height="7" fill="#404040" />
<rect x="1077" y="1050" width="1" height="7" fill="#404040" />
<rect x="1078" y="1051" width="1" height="5" fill="#404040" />
<rect x="1079" y="1052" width="1" height="3" fill="#404040" />
<rect x="1080" y="1053" width="1" height="1" fill="#404040" />
<rect x="132.5" y="1046.5" width="751" height="14" rx="2" fill="url(#thumbH)" stroke="#8f8f8f" shape-rendering="geometricPrecision"/>
<rect x="133.5" y="1047.5" width="749" height="12" rx="1" fill="none" stroke="#ffffff" stroke-opacity="0.8" shape-rendering="geometricPrecision"/>
<rect x="504" y="1050" width="1" height="7" fill="url(#gripV)" />
<rect x="505" y="1050" width="1" height="7" fill="#fafafa" />
<rect x="507" y="1050" width="1" height="7" fill="url(#gripV)" />
<rect x="508" y="1050" width="1" height="7" fill="#fafafa" />
<rect x="510" y="1050" width="1" height="7" fill="url(#gripV)" />
<rect x="511" y="1050" width="1" height="7" fill="#fafafa" />
<rect x="1087" y="1045" width="17" height="17" fill="#f0f0f0" />
<rect x="1094" y="1059" width="2" height="2" fill="#b8b8b8" />
<rect x="1097" y="1059" width="2" height="2" fill="#b8b8b8" />
<rect x="1100" y="1059" width="2" height="2" fill="#b8b8b8" />
<rect x="1097" y="1056" width="2" height="2" fill="#b8b8b8" />
<rect x="1100" y="1056" width="2" height="2" fill="#b8b8b8" />
<rect x="1100" y="1053" width="2" height="2" fill="#b8b8b8" />
</svg>
</body></html>
